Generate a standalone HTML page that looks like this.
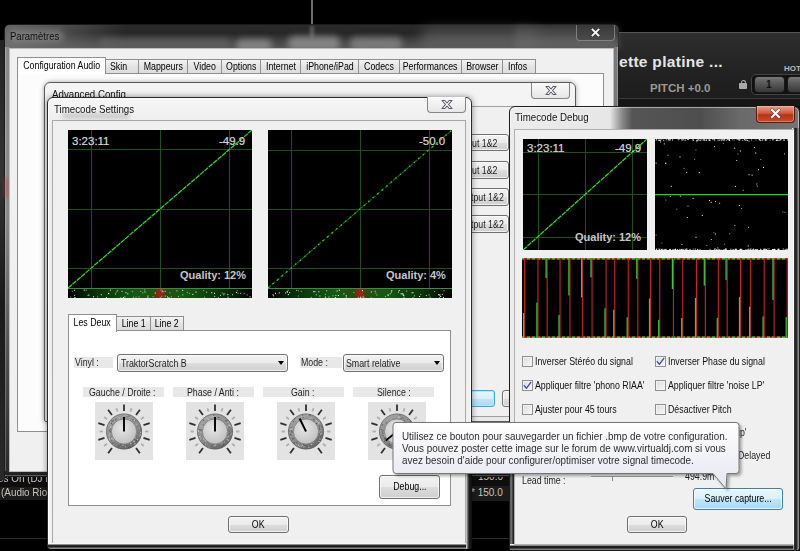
<!DOCTYPE html>
<html><head><meta charset="utf-8">
<style>
*{box-sizing:border-box;margin:0;padding:0}
html,body{width:800px;height:551px;overflow:hidden;background:#000}
body{position:relative;font-family:"Liberation Sans",sans-serif;font-size:9px;color:#1e1e1e}
.a{position:absolute}
.t{position:absolute;white-space:nowrap;line-height:1}
.d{font-size:10px !important;transform:scaleX(.88);transform-origin:0 0}
.sx{display:inline-block;transform:scaleX(.88);font-size:10px;white-space:nowrap;margin:0 -30px}
/* glass frame */
.glass{border:1px solid #1a1a1a;border-radius:6px 6px 2px 2px;box-shadow:inset 0 0 0 1px rgba(255,255,255,.35)}
.client{position:absolute;background:#f0f0f0;border:1px solid #9a9a9a}
.tab{position:absolute;height:15px;border:1px solid #8e8f8f;border-bottom:none;background:linear-gradient(#f3f3f3,#e3e3e3 50%,#dcdcdc);font-size:9px;line-height:14px;text-align:center;color:#000}
.tab.sel{background:#fff;height:17px;z-index:2}
.panel{position:absolute;background:#fff;border:1px solid #8e8f8f}
.btn{position:absolute;border:1px solid #707070;border-radius:3px;background:linear-gradient(#f2f2f2 0,#ebebeb 50%,#dddddd 51%,#cfcfcf 100%);box-shadow:inset 0 0 0 1px rgba(255,255,255,.7);text-align:center;font-size:9px;color:#000}
.btn.hot{border-color:#3c7fb1;background:linear-gradient(#eaf6fd 0,#d9f0fc 50%,#bee6fd 51%,#a7d9f5 100%)}
.closex{position:absolute;border:1px solid rgba(120,120,120,.9);border-top:none;border-radius:0 0 4px 4px;background:linear-gradient(#fbfbfb,#e6e6e6)}
.lblbg{position:absolute;background:#e8e8e8}
.combo{position:absolute;border:1px solid #707070;border-radius:3px;background:linear-gradient(#f2f2f2 0,#ebebeb 50%,#dddddd 51%,#cfcfcf 100%);box-shadow:inset 0 0 0 1px rgba(255,255,255,.7)}
.combo .arr{position:absolute;right:3px;top:6px;width:0;height:0;border-left:3.5px solid transparent;border-right:3.5px solid transparent;border-top:4px solid #000}
.chk{position:absolute;width:11px;height:11px;border:1px solid #8f8f8f;background:linear-gradient(135deg,#dcdcdc,#f8f8f8);box-shadow:inset 0 0 0 1px #f4f4f4}
</style></head><body>

<!-- ===== VirtualDJ background ===== -->
<div class="a" style="left:311px;top:0;width:2px;height:26px;background:#6a6a6a"></div>
<div class="a" style="left:600px;top:32px;width:200px;height:68px;background:linear-gradient(#2e2e2e,#222 60%,#1c1c1c);border-top:1px solid #555"></div>
<div class="a" style="left:600px;top:98px;width:200px;height:8px;background:linear-gradient(#3a3a3a 0,#3a3a3a 1px,#161616 1px)"></div>
<div class="t" style="left:619px;top:54px;font-size:15.5px;font-weight:bold;color:#e6e6e6;letter-spacing:0.3px">ette platine ...</div>
<div class="t" style="left:650px;top:83px;font-size:11.5px;font-weight:bold;color:#9a9a9a">PITCH +0.0</div>
<div class="t" style="left:784px;top:65px;font-size:8px;font-weight:bold;color:#bbb">HOT</div>
<div class="a" style="left:739px;top:83px;width:8px;height:6px;background:#aaa;border-radius:1px"></div>
<div class="a" style="left:740.5px;top:80px;width:5px;height:4px;border:1.3px solid #aaa;border-bottom:none;border-radius:2.5px 2.5px 0 0"></div>
<div class="a" style="left:751px;top:74px;width:60px;height:21px;background:#111;border:1px solid #444;border-radius:5px"></div>
<div class="a" style="left:754px;top:76px;width:31px;height:17px;background:linear-gradient(#777,#5a5a5a 40%,#383838);border-radius:4px;border:1px solid #1a1a1a"></div>
<div class="t" style="left:766px;top:80px;font-size:10px;font-weight:bold;color:#111">1</div>
<div class="a" style="left:787px;top:76px;width:20px;height:17px;background:linear-gradient(#777,#5a5a5a 40%,#383838);border-radius:4px;border:1px solid #1a1a1a"></div>
<div class="a" style="left:0;top:476px;width:60px;height:11px;background:#0e0e0e"></div>
<div class="a" style="left:0;top:487px;width:60px;height:13px;background:#1c1c1c"></div>
<div class="t" style="left:-2px;top:473px;font-size:11px;color:#c9c4bc;transform:scaleX(.9);transform-origin:0 0">es On (DJ I</div>
<div class="t" style="left:1px;top:487px;font-size:11px;color:#c9c4bc;transform:scaleX(.9);transform-origin:0 0">(Audio Rio</div>
<div class="a" style="left:0;top:538px;width:800px;height:1px;background:#2c2c2c"></div>
<div class="a" style="left:471px;top:476px;width:38px;height:11px;background:#0e0e0e"></div>
<div class="a" style="left:471px;top:486px;width:38px;height:15px;background:#1c1c1c"></div>
<div class="t" style="left:478px;top:472px;font-size:10px;color:#c9c4bc">150.0</div>
<div class="t" style="left:471px;top:488px;font-size:10px;color:#c9c4bc">* 150.0</div>
<div class="a" style="left:0;top:40px;width:5px;height:440px;background:linear-gradient(#222,#333 30%,#1a1a1a 60%,#2a2a2a)"></div>

<!-- ===== Paramètres window ===== -->
<div id="param" class="a glass" style="left:4px;top:24px;width:615px;height:453px;background:linear-gradient(90deg,#8c8c8c,#6a6a6a 15%,#5a5a5a 50%,#6a6a6a 80%,#808080)"></div>
<div class="a" style="left:5px;top:25px;width:613px;height:23px;border-radius:5px 5px 0 0;background:linear-gradient(#2a2a2a,#262626 35%,#484848 75%,#555 100%)"></div>
<div class="a" style="left:5px;top:25px;width:120px;height:23px;border-radius:5px 0 0 0;background:linear-gradient(90deg,rgba(120,120,120,.75),rgba(110,110,110,.5) 50%,rgba(90,90,90,0))"></div>
<div class="a" style="left:236px;top:39px;width:36px;height:12px;border-radius:6px;background:rgba(165,165,165,.6);filter:blur(3px)"></div>
<div class="a" style="left:288px;top:36px;width:52px;height:14px;border-radius:6px;background:rgba(170,170,170,.6);filter:blur(3px)"></div>
<div class="a" style="left:350px;top:37px;width:52px;height:13px;border-radius:6px;background:rgba(160,160,160,.55);filter:blur(3px)"></div>
<div class="a" style="left:100px;top:38px;width:130px;height:10px;background:rgba(110,110,110,.5);filter:blur(3px)"></div>
<div class="a" style="left:420px;top:28px;width:120px;height:20px;border-radius:10px;background:rgba(120,120,120,.45);filter:blur(6px)"></div>
<div class="a" style="left:310px;top:26px;width:4px;height:12px;background:rgba(140,140,140,.5);filter:blur(1.5px)"></div>
<div class="a" style="left:515px;top:26px;width:103px;height:22px;background:linear-gradient(rgba(80,80,80,.6),rgba(110,110,110,.8));filter:blur(3px)"></div>
<div class="a" style="left:8px;top:30px;width:56px;height:12px;border-radius:6px;background:rgba(150,150,150,.55);filter:blur(3px)"></div>
<div class="t" style="left:10px;top:32px;font-size:10.3px;color:#111;transform:scaleX(.925);transform-origin:0 0">Paramètres</div>
<div class="a" style="left:576px;top:25px;width:39px;height:16px;border:1px solid rgba(200,200,200,.45);border-top:none;border-radius:0 0 4px 4px;background:rgba(60,60,60,.5)"></div>
<svg class="a" style="left:589px;top:27px" width="13" height="11" viewBox="0 0 13 11"><path d="M3.5,2.5 L9.5,8.5 M9.5,2.5 L3.5,8.5" stroke="#1a1a1a" stroke-width="3.2" stroke-linecap="round" opacity=".45"/><path d="M3.5,2.5 L9.5,8.5 M9.5,2.5 L3.5,8.5" stroke="#f6f6f6" stroke-width="1.9" stroke-linecap="square"/></svg>

<div class="a" style="left:5px;top:47px;width:4px;height:425px;background:linear-gradient(#8a8a8a 0,#8a8a8a 40%,#555 70%,#2a2a2a 100%);box-shadow:inset 1px 0 0 rgba(255,255,255,.25)"></div>
<div class="a" style="left:614px;top:47px;width:4px;height:425px;background:linear-gradient(#7a7a7a 0,#6a6a6a 50%,#3a3a3a 100%);box-shadow:inset -1px 0 0 rgba(255,255,255,.25)"></div>
<div class="a" style="left:5px;top:471px;width:613px;height:5px;background:linear-gradient(#2a2a2a,#1e1e1e 70%,#777 100%);border-radius:0 0 2px 2px"></div>
<div class="a" style="left:5px;top:178px;width:4px;height:20px;background:rgba(190,70,70,.55);filter:blur(2px)"></div>
<div class="client" style="left:9px;top:48px;width:605px;height:424px;border-color:#bcbcbc"></div>
<!-- tabs -->
<div class="tab" style="left:105px;top:59px;width:34px;text-align:left"><span class="sx" style="margin:0;transform-origin:0 0;position:relative;left:4px">Skin</span></div>
<div class="tab" style="left:138px;top:59px;width:50px"><span class="sx">Mappeurs</span></div>
<div class="tab" style="left:187px;top:59px;width:35px"><span class="sx">Video</span></div>
<div class="tab" style="left:221px;top:59px;width:40px"><span class="sx">Options</span></div>
<div class="tab" style="left:260px;top:59px;width:41px"><span class="sx">Internet</span></div>
<div class="tab" style="left:300px;top:59px;width:59px"><span class="sx">iPhone/iPad</span></div>
<div class="tab" style="left:358px;top:59px;width:42px"><span class="sx">Codecs</span></div>
<div class="tab" style="left:399px;top:59px;width:63px"><span class="sx">Performances</span></div>
<div class="tab" style="left:461px;top:59px;width:42px"><span class="sx">Browser</span></div>
<div class="tab" style="left:502px;top:59px;width:34px;text-align:left"><span class="sx" style="margin:0;transform-origin:0 0;position:relative;left:5px">Infos</span></div>
<div class="panel" style="left:17px;top:73px;width:587px;height:359px;background:#fcfcfc"></div>
<div class="tab sel" style="left:17px;top:57px;width:89px;line-height:15px"><span class="sx">Configuration Audio</span></div>

<!-- ===== Advanced Config window ===== -->
<div class="a" style="left:44px;top:82px;width:532px;height:340px;border:1px solid #5a5a5a;border-radius:6px 6px 2px 2px;background:linear-gradient(#f4f4f4,#e9e9e9);box-shadow:0 0 5px rgba(0,0,0,.35)"></div>
<div class="t" style="left:52px;top:89px;font-size:10.5px;color:#111;transform:scaleX(.925);transform-origin:0 0">Advanced Config</div>
<div class="closex" style="left:531px;top:83px;width:39px;height:16px"></div>
<svg class="a" style="left:545px;top:85px" width="12" height="11" viewBox="0 0 12 11"><path d="M1,1.5 L3.8,1.5 L6,4 L8.2,1.5 L11,1.5 L7.5,5.5 L11,9.5 L8.2,9.5 L6,7 L3.8,9.5 L1,9.5 L4.5,5.5 Z" fill="#fff" stroke="#5a5a6a" stroke-width="1.1" stroke-linejoin="round"/></svg>
<div class="a" style="left:49px;top:106px;width:522px;height:311px;background:#f0f0f0;border:1px solid #a0a0a0"></div>
<!-- visible buttons of Advanced config -->
<div class="btn" style="left:440px;top:134px;width:69px;height:17px"></div>
<div class="t d" style="left:471.5px;top:138.5px">ut 1&amp;2</div>
<div class="btn" style="left:440px;top:161px;width:69px;height:18px"></div>
<div class="t d" style="left:471.5px;top:166px">ut 1&amp;2</div>
<div class="btn" style="left:440px;top:188px;width:69px;height:18px"></div>
<div class="t d" style="left:471px;top:193px">tput 1&amp;2</div>
<div class="btn" style="left:440px;top:215px;width:69px;height:18px"></div>
<div class="t d" style="left:471px;top:220px">tput 1&amp;2</div>
<div class="btn hot" style="left:450px;top:390px;width:45px;height:17px;border-color:#34a8e8;box-shadow:inset 0 0 0 1px #b6e6fb"></div>
<div class="btn" style="left:502px;top:390px;width:30px;height:17px"></div>

<!-- ===== Timecode Settings window ===== -->
<div class="a" style="left:47px;top:97px;width:425px;height:452px;border:1px solid #2a2a2a;border-radius:6px 6px 3px 3px;background:linear-gradient(#f6f6f6,#ececec 30px,#f2f2f2);box-shadow:0 0 6px rgba(0,0,0,.45),inset 0 0 0 1px rgba(255,255,255,.9)"></div>
<div class="a" style="left:62px;top:113px;width:68px;height:6px;border-radius:4px;background:rgba(120,120,120,.3);filter:blur(2px)"></div>
<div class="t" style="left:54px;top:104px;font-size:10.5px;color:#111;transform:scaleX(.925);transform-origin:0 0">Timecode Settings</div>
<div class="closex" style="left:427px;top:97px;width:39px;height:16px"></div>
<svg class="a" style="left:441px;top:99px" width="12" height="11" viewBox="0 0 12 11"><path d="M1,1.5 L3.8,1.5 L6,4 L8.2,1.5 L11,1.5 L7.5,5.5 L11,9.5 L8.2,9.5 L6,7 L3.8,9.5 L1,9.5 L4.5,5.5 Z" fill="#fff" stroke="#5a5a6a" stroke-width="1.1" stroke-linejoin="round"/></svg>
<div class="a" style="left:52px;top:120px;width:414px;height:424px;background:#f0f0f0;border:1px solid #a8a8a8"></div>
<div class="a" style="left:466px;top:474px;width:6px;height:75px;border-radius:0 0 4px 0;background:linear-gradient(90deg,#e8e8e8 0,#9a9a9a 1px,#555 2px,#222 3px,#111 5px)"></div>
<div class="a" style="left:48px;top:543px;width:418px;height:6px;border-radius:0 0 0 3px;background:linear-gradient(#f6f6f6 0,#f6f6f6 1px,#2a2a2a 2px,#1a1a1a 4px,#8a8a8a 5px)"></div>
<div class="a" style="left:68px;top:130px"><svg class="a" width="184" height="158" viewBox="0 0 184 158"><rect width="184" height="158" fill="#000"/><rect x="23" y="0" width="1" height="158" fill="#1a521a"/><rect x="92" y="0" width="1" height="158" fill="#1a521a"/><rect x="161" y="0" width="1" height="158" fill="#1a521a"/><rect x="0" y="19" width="184" height="1" fill="#1a521a"/><rect x="0" y="79" width="184" height="1" fill="#1a521a"/><rect x="0" y="138" width="184" height="1" fill="#1a521a"/><line x1="0" y1="158" x2="184" y2="0" stroke="#28e028" stroke-width="1.25" stroke-dasharray="5 0.8"/></svg></div>
<div class="a" style="left:68px;top:289px"><svg class="a" width="184" height="9" viewBox="0 0 184 9"><defs><linearGradient id="sg1" x1="0" x2="1"><stop offset="0" stop-color="#000"/><stop offset="0.12" stop-color="#062a06"/><stop offset="0.36" stop-color="#125c12"/><stop offset="0.465" stop-color="#245010"/><stop offset="0.5" stop-color="#b01a14"/><stop offset="0.535" stop-color="#245010"/><stop offset="0.64" stop-color="#125c12"/><stop offset="0.88" stop-color="#062a06"/><stop offset="1" stop-color="#000"/></linearGradient></defs><rect width="184" height="9" fill="url(#sg1)"/><g fill="#fff"><rect x="25.0" y="7.3" width="1" height="1" opacity="1"/><rect x="47.1" y="4.5" width="1" height="1" opacity="0.8"/><rect x="86.7" y="3.5" width="1" height="1" opacity="1"/><rect x="17.6" y="0.7" width="1" height="1" opacity="0.8"/><rect x="79.5" y="6.6" width="1" height="1" opacity="1"/><rect x="127.5" y="2.6" width="1" height="1" opacity="1"/><rect x="108.4" y="1.3" width="1" height="1" opacity="0.8"/><rect x="6.1" y="0.7" width="1" height="1" opacity="0.6"/><rect x="2.2" y="7.5" width="1" height="1" opacity="0.6"/><rect x="40.0" y="3.9" width="1" height="1" opacity="1"/><rect x="96.8" y="6.6" width="1" height="1" opacity="0.8"/><rect x="101.4" y="3.3" width="1" height="1" opacity="0.6"/><rect x="40.4" y="4.2" width="1" height="1" opacity="0.8"/><rect x="169.6" y="3.8" width="1" height="1" opacity="0.6"/><rect x="168.8" y="1.3" width="1" height="1" opacity="0.6"/><rect x="181.6" y="7.4" width="1" height="1" opacity="1"/><rect x="136.1" y="7.7" width="1" height="1" opacity="0.6"/><rect x="91.9" y="8.2" width="1" height="1" opacity="0.6"/><rect x="152.0" y="5.9" width="1" height="1" opacity="0.8"/><rect x="52.4" y="8.3" width="1" height="1" opacity="0.8"/><rect x="154.9" y="4.5" width="1" height="1" opacity="0.6"/><rect x="156.2" y="4.3" width="1" height="1" opacity="0.6"/><rect x="146.0" y="3.8" width="1" height="1" opacity="1"/><rect x="67.5" y="7.6" width="1" height="1" opacity="0.6"/><rect x="135.2" y="1.2" width="1" height="1" opacity="0.6"/><rect x="93.3" y="6.7" width="1" height="1" opacity="0.6"/><rect x="153.8" y="3.5" width="1" height="1" opacity="0.6"/><rect x="5.9" y="0.8" width="1" height="1" opacity="0.6"/><rect x="155.3" y="5.4" width="1" height="1" opacity="0.6"/><rect x="72.3" y="1.9" width="1" height="1" opacity="0.6"/><rect x="41.9" y="0.6" width="1" height="1" opacity="1"/><rect x="99.0" y="7.4" width="1" height="1" opacity="1"/><rect x="74.3" y="3.3" width="1" height="1" opacity="0.6"/><rect x="65.0" y="7.8" width="1" height="1" opacity="0.6"/><rect x="100.5" y="8.2" width="1" height="1" opacity="1"/><rect x="70.5" y="7.4" width="1" height="1" opacity="0.6"/><rect x="94.0" y="1.5" width="1" height="1" opacity="0.6"/><rect x="38.0" y="8.1" width="1" height="1" opacity="0.8"/><rect x="159.3" y="5.1" width="1" height="1" opacity="1"/><rect x="172.2" y="3.8" width="1" height="1" opacity="0.8"/><rect x="76.1" y="0.5" width="1" height="1" opacity="0.6"/><rect x="114.3" y="5.4" width="1" height="1" opacity="0.8"/><rect x="110.0" y="6.9" width="1" height="1" opacity="0.6"/><rect x="32.8" y="5.2" width="1" height="1" opacity="1"/><rect x="146.2" y="6.9" width="1" height="1" opacity="0.8"/><rect x="6.4" y="8.0" width="1" height="1" opacity="1"/><rect x="15.7" y="0.6" width="1" height="1" opacity="1"/><rect x="138.1" y="2.7" width="1" height="1" opacity="0.8"/><rect x="20.5" y="5.5" width="1" height="1" opacity="0.8"/><rect x="53.5" y="1.8" width="1" height="1" opacity="0.8"/><rect x="96.7" y="1.8" width="1" height="1" opacity="0.8"/><rect x="118.8" y="2.9" width="1" height="1" opacity="0.6"/><rect x="59.3" y="4.3" width="1" height="1" opacity="1"/><rect x="57.4" y="3.2" width="1" height="1" opacity="1"/><rect x="47.7" y="2.5" width="1" height="1" opacity="0.6"/><rect x="93.6" y="2.2" width="1" height="1" opacity="0.6"/><rect x="79.3" y="8.3" width="1" height="1" opacity="1"/><rect x="3.8" y="1.7" width="1" height="1" opacity="0.6"/><rect x="175.7" y="4.1" width="1" height="1" opacity="0.6"/><rect x="124.3" y="4.9" width="1" height="1" opacity="1"/><rect x="178.8" y="5.5" width="1" height="1" opacity="0.6"/><rect x="94.8" y="2.3" width="1" height="1" opacity="0.6"/><rect x="6.1" y="5.9" width="1" height="1" opacity="0.8"/><rect x="120.9" y="3.9" width="1" height="1" opacity="0.6"/><rect x="55.0" y="8.2" width="1" height="1" opacity="1"/><rect x="56.4" y="7.4" width="1" height="1" opacity="0.8"/><rect x="167.9" y="2.9" width="1" height="1" opacity="1"/><rect x="76.5" y="2.5" width="1" height="1" opacity="1"/><rect x="102.8" y="7.3" width="1" height="1" opacity="0.6"/><rect x="150.0" y="8.2" width="1" height="1" opacity="0.6"/><rect x="84.6" y="7.1" width="1" height="1" opacity="0.6"/><rect x="114.2" y="0.8" width="1" height="1" opacity="1"/><rect x="63.8" y="2.1" width="1" height="1" opacity="0.6"/><rect x="164.1" y="5.2" width="1" height="1" opacity="0.8"/><rect x="19.6" y="5.8" width="1" height="1" opacity="0.8"/><rect x="92.5" y="0.6" width="1" height="1" opacity="0.6"/><rect x="159.6" y="7.7" width="1" height="1" opacity="1"/><rect x="29.1" y="7.4" width="1" height="1" opacity="0.6"/><rect x="143.3" y="3.2" width="1" height="1" opacity="1"/><rect x="49.1" y="1.3" width="1" height="1" opacity="0.8"/></g></svg></div>
<div class="a" style="left:68px;top:288px;width:184px;height:1px;background:#3c8c3c"></div>
<div class="t" style="left:72px;top:136px;font-size:11.5px;color:#d8d8d8;-webkit-text-stroke:0.2px #d8d8d8">3:23:11</div>
<div class="t" style="left:219px;top:136px;font-size:11.5px;color:#d8d8d8;-webkit-text-stroke:0.2px #d8d8d8">-49.9</div>
<div class="t" style="left:180px;top:270px;font-size:11px;font-weight:bold;color:#c6c6c6">Quality: 12%</div>
<div class="a" style="left:268px;top:130px"><svg class="a" width="184" height="158" viewBox="0 0 184 158"><rect width="184" height="158" fill="#000"/><rect x="23" y="0" width="1" height="158" fill="#1a521a"/><rect x="92" y="0" width="1" height="158" fill="#1a521a"/><rect x="161" y="0" width="1" height="158" fill="#1a521a"/><rect x="0" y="20" width="184" height="1" fill="#1a521a"/><rect x="0" y="79" width="184" height="1" fill="#1a521a"/><rect x="0" y="138" width="184" height="1" fill="#1a521a"/><line x1="0" y1="158" x2="184" y2="0" stroke="#127012" stroke-width="1.1" stroke-dasharray="4 1.5"/><line x1="0" y1="158" x2="184" y2="0" stroke="#2ad82a" stroke-width="1.3" stroke-dasharray="1.5 4.5"/></svg></div>
<div class="a" style="left:268px;top:289px"><svg class="a" width="184" height="9" viewBox="0 0 184 9"><defs><linearGradient id="sg2" x1="0" x2="1"><stop offset="0" stop-color="#000"/><stop offset="0.12" stop-color="#062a06"/><stop offset="0.36" stop-color="#125c12"/><stop offset="0.465" stop-color="#245010"/><stop offset="0.5" stop-color="#b01a14"/><stop offset="0.535" stop-color="#245010"/><stop offset="0.64" stop-color="#125c12"/><stop offset="0.88" stop-color="#062a06"/><stop offset="1" stop-color="#000"/></linearGradient></defs><rect width="184" height="9" fill="url(#sg2)"/><g fill="#fff"><rect x="175.0" y="8.1" width="1" height="1" opacity="1"/><rect x="17.2" y="3.4" width="1" height="1" opacity="1"/><rect x="134.8" y="5.9" width="1" height="1" opacity="0.8"/><rect x="46.4" y="2.2" width="1" height="1" opacity="1"/><rect x="106.6" y="1.8" width="1" height="1" opacity="0.8"/><rect x="117.0" y="6.9" width="1" height="1" opacity="0.6"/><rect x="173.8" y="4.9" width="1" height="1" opacity="0.8"/><rect x="92.1" y="7.7" width="1" height="1" opacity="1"/><rect x="66.9" y="8.0" width="1" height="1" opacity="0.8"/><rect x="77.8" y="7.6" width="1" height="1" opacity="1"/><rect x="102.8" y="2.4" width="1" height="1" opacity="1"/><rect x="32.8" y="1.9" width="1" height="1" opacity="0.6"/><rect x="93.6" y="8.5" width="1" height="1" opacity="0.6"/><rect x="102.7" y="8.5" width="1" height="1" opacity="0.8"/><rect x="145.9" y="6.4" width="1" height="1" opacity="0.8"/><rect x="144.6" y="3.3" width="1" height="1" opacity="0.8"/><rect x="29.9" y="6.5" width="1" height="1" opacity="0.6"/><rect x="135.3" y="5.7" width="1" height="1" opacity="1"/><rect x="89.9" y="7.9" width="1" height="1" opacity="0.6"/><rect x="94.6" y="6.9" width="1" height="1" opacity="0.6"/><rect x="161.6" y="7.7" width="1" height="1" opacity="0.8"/><rect x="64.5" y="6.3" width="1" height="1" opacity="0.6"/><rect x="132.6" y="4.4" width="1" height="1" opacity="1"/><rect x="172.2" y="7.0" width="1" height="1" opacity="1"/><rect x="160.5" y="5.4" width="1" height="1" opacity="0.8"/><rect x="57.0" y="8.2" width="1" height="1" opacity="0.6"/><rect x="152.2" y="5.0" width="1" height="1" opacity="0.6"/><rect x="119.4" y="5.2" width="1" height="1" opacity="0.8"/><rect x="133.9" y="4.4" width="1" height="1" opacity="0.8"/><rect x="171.0" y="5.5" width="1" height="1" opacity="1"/><rect x="143.6" y="3.2" width="1" height="1" opacity="1"/><rect x="166.1" y="2.0" width="1" height="1" opacity="0.6"/><rect x="19.9" y="5.1" width="1" height="1" opacity="1"/><rect x="50.3" y="2.3" width="1" height="1" opacity="1"/><rect x="138.2" y="1.6" width="1" height="1" opacity="0.8"/><rect x="45.2" y="2.2" width="1" height="1" opacity="1"/><rect x="77.7" y="6.2" width="1" height="1" opacity="1"/><rect x="10.9" y="3.4" width="1" height="1" opacity="1"/><rect x="123.3" y="1.2" width="1" height="1" opacity="1"/><rect x="5.1" y="6.3" width="1" height="1" opacity="1"/><rect x="68.6" y="1.5" width="1" height="1" opacity="1"/><rect x="134.6" y="4.7" width="1" height="1" opacity="1"/><rect x="70.9" y="0.8" width="1" height="1" opacity="1"/><rect x="28.1" y="0.8" width="1" height="1" opacity="0.8"/><rect x="171.8" y="5.5" width="1" height="1" opacity="0.6"/><rect x="21.1" y="3.2" width="1" height="1" opacity="1"/><rect x="56.8" y="4.9" width="1" height="1" opacity="0.6"/><rect x="135.5" y="7.7" width="1" height="1" opacity="0.8"/><rect x="157.9" y="6.1" width="1" height="1" opacity="0.8"/><rect x="175.5" y="1.2" width="1" height="1" opacity="0.6"/><rect x="58.2" y="1.3" width="1" height="1" opacity="0.8"/><rect x="144.4" y="8.1" width="1" height="1" opacity="0.6"/><rect x="107.3" y="3.6" width="1" height="1" opacity="0.6"/><rect x="60.4" y="7.5" width="1" height="1" opacity="0.8"/><rect x="47.8" y="5.3" width="1" height="1" opacity="0.8"/><rect x="119.7" y="6.1" width="1" height="1" opacity="1"/><rect x="122.9" y="2.5" width="1" height="1" opacity="1"/><rect x="29.9" y="1.3" width="1" height="1" opacity="0.6"/><rect x="42.8" y="7.8" width="1" height="1" opacity="0.6"/><rect x="171.0" y="8.5" width="1" height="1" opacity="1"/><rect x="130.8" y="1.1" width="1" height="1" opacity="1"/><rect x="108.4" y="5.5" width="1" height="1" opacity="0.6"/><rect x="130.0" y="2.6" width="1" height="1" opacity="0.8"/><rect x="51.4" y="6.5" width="1" height="1" opacity="1"/><rect x="7.0" y="3.8" width="1" height="1" opacity="1"/><rect x="94.0" y="1.2" width="1" height="1" opacity="1"/><rect x="18.7" y="2.0" width="1" height="1" opacity="1"/><rect x="19.7" y="0.7" width="1" height="1" opacity="0.6"/><rect x="85.3" y="3.0" width="1" height="1" opacity="0.6"/><rect x="69.9" y="6.0" width="1" height="1" opacity="1"/><rect x="133.5" y="4.0" width="1" height="1" opacity="0.6"/><rect x="4.4" y="5.2" width="1" height="1" opacity="0.8"/><rect x="170.0" y="5.2" width="1" height="1" opacity="1"/><rect x="121.6" y="4.3" width="1" height="1" opacity="1"/><rect x="95.3" y="7.9" width="1" height="1" opacity="0.6"/><rect x="67.4" y="6.0" width="1" height="1" opacity="0.8"/><rect x="56.8" y="7.5" width="1" height="1" opacity="0.8"/><rect x="19.0" y="2.9" width="1" height="1" opacity="0.6"/><rect x="151.1" y="7.0" width="1" height="1" opacity="1"/><rect x="75.4" y="4.4" width="1" height="1" opacity="1"/></g></svg></div>
<div class="a" style="left:268px;top:288px;width:184px;height:1px;background:#3c8c3c"></div>
<div class="t" style="left:419px;top:136px;font-size:11.5px;color:#d8d8d8;-webkit-text-stroke:0.2px #d8d8d8">-50.0</div>
<div class="t" style="left:386px;top:270px;font-size:11px;font-weight:bold;color:#c6c6c6">Quality: 4%</div>

<!-- tab control -->
<div class="tab" style="left:116px;top:316px;width:35px;height:15px"><span class="sx">Line 1</span></div>
<div class="tab" style="left:150px;top:316px;width:34px;height:15px"><span class="sx">Line 2</span></div>
<div class="panel" style="left:68px;top:330px;width:383px;height:176px;background:#fff"></div>
<div class="tab sel" style="left:68px;top:314px;width:49px;height:18px;line-height:16px"><span class="sx">Les Deux</span></div>

<div class="lblbg" style="left:74px;top:357px;width:39px;height:11px"></div>
<div class="t d" style="left:75px;top:358px">Vinyl :</div>
<div class="combo" style="left:117px;top:354px;width:171px;height:18px"><div class="arr"></div></div>
<div class="t d" style="left:121px;top:359px">TraktorScratch B</div>
<div class="lblbg" style="left:300px;top:357px;width:42px;height:11px"></div>
<div class="t d" style="left:301px;top:358px">Mode :</div>
<div class="combo" style="left:343px;top:354px;width:101px;height:18px"><div class="arr"></div></div>
<div class="t d" style="left:346px;top:359px">Smart relative</div>

<div class="lblbg" style="left:83px;top:387px;width:81px;height:10px"></div>
<div class="t d" style="left:89px;top:388px">Gauche / Droite :</div>
<div class="lblbg" style="left:173px;top:387px;width:81px;height:10px"></div>
<div class="t d" style="left:187px;top:388px">Phase / Anti :</div>
<div class="lblbg" style="left:263px;top:387px;width:81px;height:10px"></div>
<div class="t d" style="left:291px;top:388px">Gain :</div>
<div class="lblbg" style="left:353px;top:387px;width:81px;height:10px"></div>
<div class="t d" style="left:377px;top:388px">Silence :</div>
<div class="a" style="left:95px;top:402px;width:58px;height:58px;background:#e3e3e3"><svg class="a" width="58" height="58" viewBox="0 0 58 58"><defs><radialGradient id="kg1" cx="0.42" cy="0.38" r="0.65"><stop offset="0" stop-color="#e6e6e6"/><stop offset="1" stop-color="#c0c0c0"/></radialGradient><linearGradient id="kr1" x1="0.2" y1="0" x2="0.8" y2="1"><stop offset="0" stop-color="#a4a4a4"/><stop offset="0.55" stop-color="#8a8a8a"/><stop offset="1" stop-color="#626262"/></linearGradient></defs><line x1="16.95" y1="46.08" x2="13.13" y2="51.34" stroke="#303030" stroke-width="1.8"/><line x1="9.50" y1="35.83" x2="3.32" y2="37.84" stroke="#303030" stroke-width="1.8"/><line x1="9.50" y1="23.17" x2="3.32" y2="21.16" stroke="#303030" stroke-width="1.8"/><line x1="16.95" y1="12.92" x2="13.13" y2="7.66" stroke="#303030" stroke-width="1.8"/><line x1="29.00" y1="9.00" x2="29.00" y2="2.50" stroke="#303030" stroke-width="1.8"/><line x1="41.05" y1="12.92" x2="44.87" y2="7.66" stroke="#303030" stroke-width="1.8"/><line x1="48.50" y1="23.17" x2="54.68" y2="21.16" stroke="#303030" stroke-width="1.8"/><line x1="48.50" y1="35.83" x2="54.68" y2="37.84" stroke="#303030" stroke-width="1.8"/><line x1="41.05" y1="46.08" x2="44.87" y2="51.34" stroke="#303030" stroke-width="1.8"/><line x1="12.01" y1="41.84" x2="9.18" y2="43.90" stroke="#b0b0b0" stroke-width="1.9"/><line x1="8.00" y1="29.50" x2="4.50" y2="29.50" stroke="#b0b0b0" stroke-width="1.9"/><line x1="12.01" y1="17.16" x2="9.18" y2="15.10" stroke="#b0b0b0" stroke-width="1.9"/><line x1="22.51" y1="9.53" x2="21.43" y2="6.20" stroke="#b0b0b0" stroke-width="1.9"/><line x1="35.49" y1="9.53" x2="36.57" y2="6.20" stroke="#b0b0b0" stroke-width="1.9"/><line x1="45.99" y1="17.16" x2="48.82" y2="15.10" stroke="#b0b0b0" stroke-width="1.9"/><line x1="50.00" y1="29.50" x2="53.50" y2="29.50" stroke="#b0b0b0" stroke-width="1.9"/><line x1="45.99" y1="41.84" x2="48.82" y2="43.90" stroke="#b0b0b0" stroke-width="1.9"/><circle cx="29" cy="29.5" r="17.8" fill="url(#kr1)"/><rect x="39.3" y="41.2" width="1.2" height="1.2" fill="#d4d4d4" opacity="0.8"/><rect x="27.9" y="43.9" width="1.2" height="1.2" fill="#4a4a4a" opacity="0.8"/><rect x="14.1" y="31.4" width="1.2" height="1.2" fill="#c0c0c0" opacity="0.8"/><rect x="39.3" y="36.2" width="1.2" height="1.2" fill="#4a4a4a" opacity="0.8"/><rect x="13.8" y="35.5" width="1.2" height="1.2" fill="#d4d4d4" opacity="0.8"/><rect x="23.7" y="15.6" width="1.2" height="1.2" fill="#c0c0c0" opacity="0.8"/><rect x="17.1" y="21.6" width="1.2" height="1.2" fill="#5a5a5a" opacity="0.8"/><rect x="41.3" y="31.4" width="1.2" height="1.2" fill="#b0b0b0" opacity="0.8"/><rect x="44.9" y="29.9" width="1.2" height="1.2" fill="#c0c0c0" opacity="0.8"/><rect x="44.0" y="25.8" width="1.2" height="1.2" fill="#b0b0b0" opacity="0.8"/><rect x="31.0" y="43.4" width="1.2" height="1.2" fill="#4a4a4a" opacity="0.8"/><rect x="14.8" y="24.2" width="1.2" height="1.2" fill="#c0c0c0" opacity="0.8"/><rect x="29.6" y="12.1" width="1.2" height="1.2" fill="#d4d4d4" opacity="0.8"/><rect x="14.0" y="37.3" width="1.2" height="1.2" fill="#d4d4d4" opacity="0.8"/><rect x="35.1" y="44.5" width="1.2" height="1.2" fill="#5a5a5a" opacity="0.8"/><rect x="38.8" y="38.8" width="1.2" height="1.2" fill="#b0b0b0" opacity="0.8"/><rect x="41.9" y="23.2" width="1.2" height="1.2" fill="#c0c0c0" opacity="0.8"/><rect x="23.3" y="43.4" width="1.2" height="1.2" fill="#4a4a4a" opacity="0.8"/><rect x="36.9" y="16.5" width="1.2" height="1.2" fill="#b0b0b0" opacity="0.8"/><rect x="37.4" y="17.0" width="1.2" height="1.2" fill="#4a4a4a" opacity="0.8"/><rect x="16.6" y="35.9" width="1.2" height="1.2" fill="#b0b0b0" opacity="0.8"/><rect x="40.3" y="18.1" width="1.2" height="1.2" fill="#5a5a5a" opacity="0.8"/><rect x="41.8" y="37.0" width="1.2" height="1.2" fill="#d4d4d4" opacity="0.8"/><rect x="31.1" y="14.1" width="1.2" height="1.2" fill="#4a4a4a" opacity="0.8"/><rect x="17.5" y="40.5" width="1.2" height="1.2" fill="#4a4a4a" opacity="0.8"/><rect x="43.6" y="33.2" width="1.2" height="1.2" fill="#b0b0b0" opacity="0.8"/><rect x="16.3" y="20.8" width="1.2" height="1.2" fill="#c0c0c0" opacity="0.8"/><rect x="35.2" y="41.0" width="1.2" height="1.2" fill="#d4d4d4" opacity="0.8"/><rect x="30.3" y="13.9" width="1.2" height="1.2" fill="#b0b0b0" opacity="0.8"/><rect x="30.1" y="43.9" width="1.2" height="1.2" fill="#b0b0b0" opacity="0.8"/><rect x="18.3" y="42.2" width="1.2" height="1.2" fill="#b0b0b0" opacity="0.8"/><rect x="16.1" y="18.8" width="1.2" height="1.2" fill="#4a4a4a" opacity="0.8"/><rect x="31.8" y="13.0" width="1.2" height="1.2" fill="#b0b0b0" opacity="0.8"/><rect x="33.9" y="14.9" width="1.2" height="1.2" fill="#b0b0b0" opacity="0.8"/><rect x="33.0" y="45.0" width="1.2" height="1.2" fill="#4a4a4a" opacity="0.8"/><rect x="38.9" y="17.8" width="1.2" height="1.2" fill="#c0c0c0" opacity="0.8"/><rect x="42.1" y="23.6" width="1.2" height="1.2" fill="#5a5a5a" opacity="0.8"/><rect x="17.2" y="35.6" width="1.2" height="1.2" fill="#b0b0b0" opacity="0.8"/><rect x="17.4" y="18.1" width="1.2" height="1.2" fill="#4a4a4a" opacity="0.8"/><rect x="15.3" y="19.4" width="1.2" height="1.2" fill="#c0c0c0" opacity="0.8"/><rect x="15.4" y="24.6" width="1.2" height="1.2" fill="#d4d4d4" opacity="0.8"/><rect x="33.3" y="13.5" width="1.2" height="1.2" fill="#5a5a5a" opacity="0.8"/><rect x="44.8" y="32.3" width="1.2" height="1.2" fill="#d4d4d4" opacity="0.8"/><rect x="39.7" y="35.4" width="1.2" height="1.2" fill="#d4d4d4" opacity="0.8"/><rect x="28.8" y="14.8" width="1.2" height="1.2" fill="#5a5a5a" opacity="0.8"/><rect x="40.4" y="38.7" width="1.2" height="1.2" fill="#5a5a5a" opacity="0.8"/><rect x="25.0" y="42.1" width="1.2" height="1.2" fill="#5a5a5a" opacity="0.8"/><rect x="14.9" y="26.6" width="1.2" height="1.2" fill="#5a5a5a" opacity="0.8"/><rect x="19.9" y="17.5" width="1.2" height="1.2" fill="#5a5a5a" opacity="0.8"/><rect x="14.9" y="29.2" width="1.2" height="1.2" fill="#5a5a5a" opacity="0.8"/><rect x="17.3" y="38.5" width="1.2" height="1.2" fill="#c0c0c0" opacity="0.8"/><rect x="27.7" y="42.9" width="1.2" height="1.2" fill="#b0b0b0" opacity="0.8"/><rect x="45.1" y="26.4" width="1.2" height="1.2" fill="#4a4a4a" opacity="0.8"/><rect x="33.7" y="17.0" width="1.2" height="1.2" fill="#d4d4d4" opacity="0.8"/><rect x="17.9" y="36.8" width="1.2" height="1.2" fill="#c0c0c0" opacity="0.8"/><rect x="14.2" y="33.9" width="1.2" height="1.2" fill="#4a4a4a" opacity="0.8"/><rect x="15.1" y="25.1" width="1.2" height="1.2" fill="#b0b0b0" opacity="0.8"/><rect x="14.0" y="33.5" width="1.2" height="1.2" fill="#d4d4d4" opacity="0.8"/><rect x="16.3" y="38.3" width="1.2" height="1.2" fill="#5a5a5a" opacity="0.8"/><rect x="20.5" y="16.5" width="1.2" height="1.2" fill="#5a5a5a" opacity="0.8"/><rect x="38.2" y="38.7" width="1.2" height="1.2" fill="#d4d4d4" opacity="0.8"/><rect x="22.7" y="44.3" width="1.2" height="1.2" fill="#5a5a5a" opacity="0.8"/><rect x="40.7" y="21.8" width="1.2" height="1.2" fill="#c0c0c0" opacity="0.8"/><rect x="16.3" y="35.9" width="1.2" height="1.2" fill="#d4d4d4" opacity="0.8"/><rect x="13.2" y="22.8" width="1.2" height="1.2" fill="#b0b0b0" opacity="0.8"/><rect x="35.5" y="13.6" width="1.2" height="1.2" fill="#b0b0b0" opacity="0.8"/><rect x="12.6" y="32.9" width="1.2" height="1.2" fill="#b0b0b0" opacity="0.8"/><rect x="13.9" y="28.1" width="1.2" height="1.2" fill="#5a5a5a" opacity="0.8"/><rect x="40.8" y="37.8" width="1.2" height="1.2" fill="#4a4a4a" opacity="0.8"/><rect x="15.8" y="20.8" width="1.2" height="1.2" fill="#4a4a4a" opacity="0.8"/><circle cx="29" cy="29.5" r="17.6" fill="none" stroke="#505050" stroke-width="0.7" opacity="0.8"/><circle cx="29" cy="29.5" r="12.6" fill="url(#kg1)" stroke="#7a7a7a" stroke-width="0.8"/><line x1="29" y1="29.5" x2="29.00" y2="15.00" stroke="#000" stroke-width="1.9"/></svg></div>
<div class="a" style="left:186px;top:402px;width:58px;height:58px;background:#e3e3e3"><svg class="a" width="58" height="58" viewBox="0 0 58 58"><defs><radialGradient id="kg2" cx="0.42" cy="0.38" r="0.65"><stop offset="0" stop-color="#e6e6e6"/><stop offset="1" stop-color="#c0c0c0"/></radialGradient><linearGradient id="kr2" x1="0.2" y1="0" x2="0.8" y2="1"><stop offset="0" stop-color="#a4a4a4"/><stop offset="0.55" stop-color="#8a8a8a"/><stop offset="1" stop-color="#626262"/></linearGradient></defs><line x1="16.95" y1="46.08" x2="13.13" y2="51.34" stroke="#303030" stroke-width="1.8"/><line x1="9.50" y1="35.83" x2="3.32" y2="37.84" stroke="#303030" stroke-width="1.8"/><line x1="9.50" y1="23.17" x2="3.32" y2="21.16" stroke="#303030" stroke-width="1.8"/><line x1="16.95" y1="12.92" x2="13.13" y2="7.66" stroke="#303030" stroke-width="1.8"/><line x1="29.00" y1="9.00" x2="29.00" y2="2.50" stroke="#303030" stroke-width="1.8"/><line x1="41.05" y1="12.92" x2="44.87" y2="7.66" stroke="#303030" stroke-width="1.8"/><line x1="48.50" y1="23.17" x2="54.68" y2="21.16" stroke="#303030" stroke-width="1.8"/><line x1="48.50" y1="35.83" x2="54.68" y2="37.84" stroke="#303030" stroke-width="1.8"/><line x1="41.05" y1="46.08" x2="44.87" y2="51.34" stroke="#303030" stroke-width="1.8"/><line x1="12.01" y1="41.84" x2="9.18" y2="43.90" stroke="#b0b0b0" stroke-width="1.9"/><line x1="8.00" y1="29.50" x2="4.50" y2="29.50" stroke="#b0b0b0" stroke-width="1.9"/><line x1="12.01" y1="17.16" x2="9.18" y2="15.10" stroke="#b0b0b0" stroke-width="1.9"/><line x1="22.51" y1="9.53" x2="21.43" y2="6.20" stroke="#b0b0b0" stroke-width="1.9"/><line x1="35.49" y1="9.53" x2="36.57" y2="6.20" stroke="#b0b0b0" stroke-width="1.9"/><line x1="45.99" y1="17.16" x2="48.82" y2="15.10" stroke="#b0b0b0" stroke-width="1.9"/><line x1="50.00" y1="29.50" x2="53.50" y2="29.50" stroke="#b0b0b0" stroke-width="1.9"/><line x1="45.99" y1="41.84" x2="48.82" y2="43.90" stroke="#b0b0b0" stroke-width="1.9"/><circle cx="29" cy="29.5" r="17.8" fill="url(#kr2)"/><rect x="44.6" y="24.3" width="1.2" height="1.2" fill="#d4d4d4" opacity="0.8"/><rect x="40.5" y="36.8" width="1.2" height="1.2" fill="#c0c0c0" opacity="0.8"/><rect x="27.0" y="13.3" width="1.2" height="1.2" fill="#5a5a5a" opacity="0.8"/><rect x="28.3" y="42.7" width="1.2" height="1.2" fill="#d4d4d4" opacity="0.8"/><rect x="16.5" y="22.2" width="1.2" height="1.2" fill="#4a4a4a" opacity="0.8"/><rect x="17.9" y="16.5" width="1.2" height="1.2" fill="#b0b0b0" opacity="0.8"/><rect x="42.8" y="24.2" width="1.2" height="1.2" fill="#4a4a4a" opacity="0.8"/><rect x="11.8" y="28.7" width="1.2" height="1.2" fill="#d4d4d4" opacity="0.8"/><rect x="17.4" y="41.5" width="1.2" height="1.2" fill="#4a4a4a" opacity="0.8"/><rect x="13.7" y="36.5" width="1.2" height="1.2" fill="#c0c0c0" opacity="0.8"/><rect x="15.5" y="23.7" width="1.2" height="1.2" fill="#d4d4d4" opacity="0.8"/><rect x="34.5" y="41.2" width="1.2" height="1.2" fill="#b0b0b0" opacity="0.8"/><rect x="11.4" y="27.8" width="1.2" height="1.2" fill="#b0b0b0" opacity="0.8"/><rect x="35.3" y="44.0" width="1.2" height="1.2" fill="#4a4a4a" opacity="0.8"/><rect x="26.8" y="12.4" width="1.2" height="1.2" fill="#5a5a5a" opacity="0.8"/><rect x="32.0" y="14.9" width="1.2" height="1.2" fill="#4a4a4a" opacity="0.8"/><rect x="36.9" y="42.5" width="1.2" height="1.2" fill="#4a4a4a" opacity="0.8"/><rect x="20.5" y="17.3" width="1.2" height="1.2" fill="#5a5a5a" opacity="0.8"/><rect x="41.8" y="22.1" width="1.2" height="1.2" fill="#5a5a5a" opacity="0.8"/><rect x="20.6" y="16.3" width="1.2" height="1.2" fill="#4a4a4a" opacity="0.8"/><rect x="19.0" y="41.7" width="1.2" height="1.2" fill="#b0b0b0" opacity="0.8"/><rect x="25.9" y="14.2" width="1.2" height="1.2" fill="#c0c0c0" opacity="0.8"/><rect x="43.5" y="23.0" width="1.2" height="1.2" fill="#c0c0c0" opacity="0.8"/><rect x="39.5" y="18.1" width="1.2" height="1.2" fill="#4a4a4a" opacity="0.8"/><rect x="22.2" y="44.6" width="1.2" height="1.2" fill="#b0b0b0" opacity="0.8"/><rect x="14.5" y="23.2" width="1.2" height="1.2" fill="#b0b0b0" opacity="0.8"/><rect x="16.3" y="21.4" width="1.2" height="1.2" fill="#c0c0c0" opacity="0.8"/><rect x="14.0" y="29.9" width="1.2" height="1.2" fill="#b0b0b0" opacity="0.8"/><rect x="40.3" y="18.0" width="1.2" height="1.2" fill="#5a5a5a" opacity="0.8"/><rect x="25.9" y="12.5" width="1.2" height="1.2" fill="#c0c0c0" opacity="0.8"/><rect x="41.8" y="28.7" width="1.2" height="1.2" fill="#b0b0b0" opacity="0.8"/><rect x="20.3" y="17.3" width="1.2" height="1.2" fill="#c0c0c0" opacity="0.8"/><rect x="21.5" y="13.7" width="1.2" height="1.2" fill="#b0b0b0" opacity="0.8"/><rect x="37.6" y="39.5" width="1.2" height="1.2" fill="#c0c0c0" opacity="0.8"/><rect x="40.8" y="24.3" width="1.2" height="1.2" fill="#d4d4d4" opacity="0.8"/><rect x="41.9" y="33.9" width="1.2" height="1.2" fill="#c0c0c0" opacity="0.8"/><rect x="22.2" y="17.1" width="1.2" height="1.2" fill="#d4d4d4" opacity="0.8"/><rect x="44.1" y="31.4" width="1.2" height="1.2" fill="#d4d4d4" opacity="0.8"/><rect x="19.0" y="38.6" width="1.2" height="1.2" fill="#c0c0c0" opacity="0.8"/><rect x="27.0" y="13.9" width="1.2" height="1.2" fill="#d4d4d4" opacity="0.8"/><rect x="18.5" y="37.6" width="1.2" height="1.2" fill="#c0c0c0" opacity="0.8"/><rect x="36.0" y="39.6" width="1.2" height="1.2" fill="#5a5a5a" opacity="0.8"/><rect x="42.8" y="23.1" width="1.2" height="1.2" fill="#d4d4d4" opacity="0.8"/><rect x="25.0" y="43.5" width="1.2" height="1.2" fill="#5a5a5a" opacity="0.8"/><rect x="13.2" y="34.0" width="1.2" height="1.2" fill="#d4d4d4" opacity="0.8"/><rect x="41.5" y="19.6" width="1.2" height="1.2" fill="#b0b0b0" opacity="0.8"/><rect x="24.3" y="14.6" width="1.2" height="1.2" fill="#c0c0c0" opacity="0.8"/><rect x="41.5" y="37.6" width="1.2" height="1.2" fill="#d4d4d4" opacity="0.8"/><rect x="44.4" y="31.3" width="1.2" height="1.2" fill="#c0c0c0" opacity="0.8"/><rect x="12.4" y="27.1" width="1.2" height="1.2" fill="#4a4a4a" opacity="0.8"/><rect x="14.9" y="27.6" width="1.2" height="1.2" fill="#5a5a5a" opacity="0.8"/><rect x="27.5" y="44.3" width="1.2" height="1.2" fill="#4a4a4a" opacity="0.8"/><rect x="19.4" y="15.9" width="1.2" height="1.2" fill="#c0c0c0" opacity="0.8"/><rect x="21.7" y="16.6" width="1.2" height="1.2" fill="#c0c0c0" opacity="0.8"/><rect x="35.5" y="40.3" width="1.2" height="1.2" fill="#c0c0c0" opacity="0.8"/><rect x="11.5" y="28.0" width="1.2" height="1.2" fill="#d4d4d4" opacity="0.8"/><rect x="42.3" y="28.4" width="1.2" height="1.2" fill="#4a4a4a" opacity="0.8"/><rect x="40.3" y="34.8" width="1.2" height="1.2" fill="#c0c0c0" opacity="0.8"/><rect x="16.9" y="17.5" width="1.2" height="1.2" fill="#5a5a5a" opacity="0.8"/><rect x="27.8" y="43.6" width="1.2" height="1.2" fill="#b0b0b0" opacity="0.8"/><rect x="28.5" y="15.3" width="1.2" height="1.2" fill="#4a4a4a" opacity="0.8"/><rect x="17.1" y="36.2" width="1.2" height="1.2" fill="#d4d4d4" opacity="0.8"/><rect x="29.2" y="42.3" width="1.2" height="1.2" fill="#c0c0c0" opacity="0.8"/><rect x="28.4" y="15.5" width="1.2" height="1.2" fill="#d4d4d4" opacity="0.8"/><rect x="13.7" y="27.0" width="1.2" height="1.2" fill="#5a5a5a" opacity="0.8"/><rect x="14.2" y="25.7" width="1.2" height="1.2" fill="#c0c0c0" opacity="0.8"/><rect x="26.5" y="14.3" width="1.2" height="1.2" fill="#b0b0b0" opacity="0.8"/><rect x="43.6" y="31.0" width="1.2" height="1.2" fill="#4a4a4a" opacity="0.8"/><rect x="42.2" y="22.3" width="1.2" height="1.2" fill="#d4d4d4" opacity="0.8"/><rect x="20.7" y="16.1" width="1.2" height="1.2" fill="#d4d4d4" opacity="0.8"/><circle cx="29" cy="29.5" r="17.6" fill="none" stroke="#505050" stroke-width="0.7" opacity="0.8"/><circle cx="29" cy="29.5" r="12.6" fill="url(#kg2)" stroke="#7a7a7a" stroke-width="0.8"/><line x1="29" y1="29.5" x2="29.00" y2="15.00" stroke="#000" stroke-width="1.9"/></svg></div>
<div class="a" style="left:277px;top:402px;width:58px;height:58px;background:#e3e3e3"><svg class="a" width="58" height="58" viewBox="0 0 58 58"><defs><radialGradient id="kg3" cx="0.42" cy="0.38" r="0.65"><stop offset="0" stop-color="#e6e6e6"/><stop offset="1" stop-color="#c0c0c0"/></radialGradient><linearGradient id="kr3" x1="0.2" y1="0" x2="0.8" y2="1"><stop offset="0" stop-color="#a4a4a4"/><stop offset="0.55" stop-color="#8a8a8a"/><stop offset="1" stop-color="#626262"/></linearGradient></defs><line x1="16.95" y1="46.08" x2="13.13" y2="51.34" stroke="#303030" stroke-width="1.8"/><line x1="9.50" y1="35.83" x2="3.32" y2="37.84" stroke="#303030" stroke-width="1.8"/><line x1="9.50" y1="23.17" x2="3.32" y2="21.16" stroke="#303030" stroke-width="1.8"/><line x1="16.95" y1="12.92" x2="13.13" y2="7.66" stroke="#303030" stroke-width="1.8"/><line x1="29.00" y1="9.00" x2="29.00" y2="2.50" stroke="#303030" stroke-width="1.8"/><line x1="41.05" y1="12.92" x2="44.87" y2="7.66" stroke="#303030" stroke-width="1.8"/><line x1="48.50" y1="23.17" x2="54.68" y2="21.16" stroke="#303030" stroke-width="1.8"/><line x1="48.50" y1="35.83" x2="54.68" y2="37.84" stroke="#303030" stroke-width="1.8"/><line x1="41.05" y1="46.08" x2="44.87" y2="51.34" stroke="#303030" stroke-width="1.8"/><line x1="12.01" y1="41.84" x2="9.18" y2="43.90" stroke="#b0b0b0" stroke-width="1.9"/><line x1="8.00" y1="29.50" x2="4.50" y2="29.50" stroke="#b0b0b0" stroke-width="1.9"/><line x1="12.01" y1="17.16" x2="9.18" y2="15.10" stroke="#b0b0b0" stroke-width="1.9"/><line x1="22.51" y1="9.53" x2="21.43" y2="6.20" stroke="#b0b0b0" stroke-width="1.9"/><line x1="35.49" y1="9.53" x2="36.57" y2="6.20" stroke="#b0b0b0" stroke-width="1.9"/><line x1="45.99" y1="17.16" x2="48.82" y2="15.10" stroke="#b0b0b0" stroke-width="1.9"/><line x1="50.00" y1="29.50" x2="53.50" y2="29.50" stroke="#b0b0b0" stroke-width="1.9"/><line x1="45.99" y1="41.84" x2="48.82" y2="43.90" stroke="#b0b0b0" stroke-width="1.9"/><circle cx="29" cy="29.5" r="17.8" fill="url(#kr3)"/><rect x="29.5" y="44.0" width="1.2" height="1.2" fill="#5a5a5a" opacity="0.8"/><rect x="41.3" y="21.4" width="1.2" height="1.2" fill="#b0b0b0" opacity="0.8"/><rect x="40.4" y="34.1" width="1.2" height="1.2" fill="#4a4a4a" opacity="0.8"/><rect x="27.6" y="42.8" width="1.2" height="1.2" fill="#4a4a4a" opacity="0.8"/><rect x="13.7" y="25.0" width="1.2" height="1.2" fill="#4a4a4a" opacity="0.8"/><rect x="19.7" y="18.5" width="1.2" height="1.2" fill="#c0c0c0" opacity="0.8"/><rect x="38.6" y="17.8" width="1.2" height="1.2" fill="#d4d4d4" opacity="0.8"/><rect x="22.1" y="17.2" width="1.2" height="1.2" fill="#b0b0b0" opacity="0.8"/><rect x="43.9" y="33.2" width="1.2" height="1.2" fill="#5a5a5a" opacity="0.8"/><rect x="12.8" y="31.6" width="1.2" height="1.2" fill="#4a4a4a" opacity="0.8"/><rect x="24.7" y="12.6" width="1.2" height="1.2" fill="#4a4a4a" opacity="0.8"/><rect x="26.3" y="13.7" width="1.2" height="1.2" fill="#c0c0c0" opacity="0.8"/><rect x="38.1" y="19.7" width="1.2" height="1.2" fill="#c0c0c0" opacity="0.8"/><rect x="14.4" y="29.4" width="1.2" height="1.2" fill="#4a4a4a" opacity="0.8"/><rect x="31.4" y="12.8" width="1.2" height="1.2" fill="#4a4a4a" opacity="0.8"/><rect x="13.9" y="28.2" width="1.2" height="1.2" fill="#5a5a5a" opacity="0.8"/><rect x="14.1" y="25.8" width="1.2" height="1.2" fill="#c0c0c0" opacity="0.8"/><rect x="41.4" y="20.0" width="1.2" height="1.2" fill="#d4d4d4" opacity="0.8"/><rect x="38.9" y="15.6" width="1.2" height="1.2" fill="#c0c0c0" opacity="0.8"/><rect x="23.9" y="15.3" width="1.2" height="1.2" fill="#b0b0b0" opacity="0.8"/><rect x="41.0" y="20.3" width="1.2" height="1.2" fill="#c0c0c0" opacity="0.8"/><rect x="17.0" y="16.3" width="1.2" height="1.2" fill="#5a5a5a" opacity="0.8"/><rect x="25.5" y="41.8" width="1.2" height="1.2" fill="#4a4a4a" opacity="0.8"/><rect x="42.2" y="37.5" width="1.2" height="1.2" fill="#4a4a4a" opacity="0.8"/><rect x="38.8" y="21.0" width="1.2" height="1.2" fill="#4a4a4a" opacity="0.8"/><rect x="30.3" y="12.5" width="1.2" height="1.2" fill="#d4d4d4" opacity="0.8"/><rect x="15.7" y="19.1" width="1.2" height="1.2" fill="#4a4a4a" opacity="0.8"/><rect x="25.6" y="14.9" width="1.2" height="1.2" fill="#5a5a5a" opacity="0.8"/><rect x="11.4" y="28.3" width="1.2" height="1.2" fill="#5a5a5a" opacity="0.8"/><rect x="41.8" y="29.5" width="1.2" height="1.2" fill="#b0b0b0" opacity="0.8"/><rect x="41.9" y="31.6" width="1.2" height="1.2" fill="#4a4a4a" opacity="0.8"/><rect x="24.8" y="42.5" width="1.2" height="1.2" fill="#d4d4d4" opacity="0.8"/><rect x="42.6" y="27.1" width="1.2" height="1.2" fill="#5a5a5a" opacity="0.8"/><rect x="44.4" y="24.6" width="1.2" height="1.2" fill="#4a4a4a" opacity="0.8"/><rect x="16.6" y="40.4" width="1.2" height="1.2" fill="#4a4a4a" opacity="0.8"/><rect x="18.9" y="16.8" width="1.2" height="1.2" fill="#b0b0b0" opacity="0.8"/><rect x="41.9" y="39.0" width="1.2" height="1.2" fill="#b0b0b0" opacity="0.8"/><rect x="26.3" y="44.3" width="1.2" height="1.2" fill="#c0c0c0" opacity="0.8"/><rect x="42.0" y="23.2" width="1.2" height="1.2" fill="#5a5a5a" opacity="0.8"/><rect x="13.3" y="26.9" width="1.2" height="1.2" fill="#d4d4d4" opacity="0.8"/><rect x="32.4" y="12.4" width="1.2" height="1.2" fill="#5a5a5a" opacity="0.8"/><rect x="43.7" y="30.8" width="1.2" height="1.2" fill="#c0c0c0" opacity="0.8"/><rect x="42.8" y="34.6" width="1.2" height="1.2" fill="#4a4a4a" opacity="0.8"/><rect x="18.4" y="42.2" width="1.2" height="1.2" fill="#b0b0b0" opacity="0.8"/><rect x="24.1" y="13.5" width="1.2" height="1.2" fill="#d4d4d4" opacity="0.8"/><rect x="14.2" y="19.9" width="1.2" height="1.2" fill="#d4d4d4" opacity="0.8"/><rect x="42.0" y="25.7" width="1.2" height="1.2" fill="#4a4a4a" opacity="0.8"/><rect x="23.8" y="43.6" width="1.2" height="1.2" fill="#c0c0c0" opacity="0.8"/><rect x="19.0" y="39.7" width="1.2" height="1.2" fill="#5a5a5a" opacity="0.8"/><rect x="36.2" y="17.2" width="1.2" height="1.2" fill="#4a4a4a" opacity="0.8"/><rect x="41.2" y="38.9" width="1.2" height="1.2" fill="#b0b0b0" opacity="0.8"/><rect x="22.9" y="16.5" width="1.2" height="1.2" fill="#b0b0b0" opacity="0.8"/><rect x="31.2" y="44.9" width="1.2" height="1.2" fill="#c0c0c0" opacity="0.8"/><rect x="21.0" y="42.8" width="1.2" height="1.2" fill="#d4d4d4" opacity="0.8"/><rect x="39.9" y="37.4" width="1.2" height="1.2" fill="#5a5a5a" opacity="0.8"/><rect x="22.1" y="16.5" width="1.2" height="1.2" fill="#c0c0c0" opacity="0.8"/><rect x="42.4" y="36.6" width="1.2" height="1.2" fill="#c0c0c0" opacity="0.8"/><rect x="39.5" y="19.1" width="1.2" height="1.2" fill="#c0c0c0" opacity="0.8"/><rect x="31.4" y="16.1" width="1.2" height="1.2" fill="#c0c0c0" opacity="0.8"/><rect x="21.9" y="43.9" width="1.2" height="1.2" fill="#b0b0b0" opacity="0.8"/><rect x="34.1" y="41.8" width="1.2" height="1.2" fill="#d4d4d4" opacity="0.8"/><rect x="33.4" y="15.4" width="1.2" height="1.2" fill="#c0c0c0" opacity="0.8"/><rect x="15.1" y="36.1" width="1.2" height="1.2" fill="#5a5a5a" opacity="0.8"/><rect x="13.2" y="32.3" width="1.2" height="1.2" fill="#5a5a5a" opacity="0.8"/><rect x="15.6" y="36.0" width="1.2" height="1.2" fill="#4a4a4a" opacity="0.8"/><rect x="35.6" y="39.7" width="1.2" height="1.2" fill="#b0b0b0" opacity="0.8"/><rect x="43.1" y="27.7" width="1.2" height="1.2" fill="#c0c0c0" opacity="0.8"/><rect x="42.9" y="31.9" width="1.2" height="1.2" fill="#b0b0b0" opacity="0.8"/><rect x="43.2" y="25.4" width="1.2" height="1.2" fill="#c0c0c0" opacity="0.8"/><rect x="39.0" y="16.3" width="1.2" height="1.2" fill="#5a5a5a" opacity="0.8"/><circle cx="29" cy="29.5" r="17.6" fill="none" stroke="#505050" stroke-width="0.7" opacity="0.8"/><circle cx="29" cy="29.5" r="12.6" fill="url(#kg3)" stroke="#7a7a7a" stroke-width="0.8"/><line x1="29" y1="29.5" x2="22.64" y2="16.47" stroke="#000" stroke-width="1.9"/></svg></div>
<div class="a" style="left:368px;top:402px;width:58px;height:58px;background:#e3e3e3"><svg class="a" width="58" height="58" viewBox="0 0 58 58"><defs><radialGradient id="kg4" cx="0.42" cy="0.38" r="0.65"><stop offset="0" stop-color="#e6e6e6"/><stop offset="1" stop-color="#c0c0c0"/></radialGradient><linearGradient id="kr4" x1="0.2" y1="0" x2="0.8" y2="1"><stop offset="0" stop-color="#a4a4a4"/><stop offset="0.55" stop-color="#8a8a8a"/><stop offset="1" stop-color="#626262"/></linearGradient></defs><line x1="16.95" y1="46.08" x2="13.13" y2="51.34" stroke="#303030" stroke-width="1.8"/><line x1="9.50" y1="35.83" x2="3.32" y2="37.84" stroke="#303030" stroke-width="1.8"/><line x1="9.50" y1="23.17" x2="3.32" y2="21.16" stroke="#303030" stroke-width="1.8"/><line x1="16.95" y1="12.92" x2="13.13" y2="7.66" stroke="#303030" stroke-width="1.8"/><line x1="29.00" y1="9.00" x2="29.00" y2="2.50" stroke="#303030" stroke-width="1.8"/><line x1="41.05" y1="12.92" x2="44.87" y2="7.66" stroke="#303030" stroke-width="1.8"/><line x1="48.50" y1="23.17" x2="54.68" y2="21.16" stroke="#303030" stroke-width="1.8"/><line x1="48.50" y1="35.83" x2="54.68" y2="37.84" stroke="#303030" stroke-width="1.8"/><line x1="41.05" y1="46.08" x2="44.87" y2="51.34" stroke="#303030" stroke-width="1.8"/><line x1="12.01" y1="41.84" x2="9.18" y2="43.90" stroke="#b0b0b0" stroke-width="1.9"/><line x1="8.00" y1="29.50" x2="4.50" y2="29.50" stroke="#b0b0b0" stroke-width="1.9"/><line x1="12.01" y1="17.16" x2="9.18" y2="15.10" stroke="#b0b0b0" stroke-width="1.9"/><line x1="22.51" y1="9.53" x2="21.43" y2="6.20" stroke="#b0b0b0" stroke-width="1.9"/><line x1="35.49" y1="9.53" x2="36.57" y2="6.20" stroke="#b0b0b0" stroke-width="1.9"/><line x1="45.99" y1="17.16" x2="48.82" y2="15.10" stroke="#b0b0b0" stroke-width="1.9"/><line x1="50.00" y1="29.50" x2="53.50" y2="29.50" stroke="#b0b0b0" stroke-width="1.9"/><line x1="45.99" y1="41.84" x2="48.82" y2="43.90" stroke="#b0b0b0" stroke-width="1.9"/><circle cx="29" cy="29.5" r="17.8" fill="url(#kr4)"/><rect x="29.6" y="42.3" width="1.2" height="1.2" fill="#4a4a4a" opacity="0.8"/><rect x="15.2" y="30.7" width="1.2" height="1.2" fill="#d4d4d4" opacity="0.8"/><rect x="14.8" y="38.6" width="1.2" height="1.2" fill="#d4d4d4" opacity="0.8"/><rect x="31.1" y="43.8" width="1.2" height="1.2" fill="#5a5a5a" opacity="0.8"/><rect x="31.4" y="12.9" width="1.2" height="1.2" fill="#5a5a5a" opacity="0.8"/><rect x="32.1" y="45.2" width="1.2" height="1.2" fill="#5a5a5a" opacity="0.8"/><rect x="32.7" y="15.8" width="1.2" height="1.2" fill="#5a5a5a" opacity="0.8"/><rect x="24.3" y="44.9" width="1.2" height="1.2" fill="#5a5a5a" opacity="0.8"/><rect x="41.6" y="36.9" width="1.2" height="1.2" fill="#4a4a4a" opacity="0.8"/><rect x="14.7" y="28.4" width="1.2" height="1.2" fill="#4a4a4a" opacity="0.8"/><rect x="25.3" y="45.4" width="1.2" height="1.2" fill="#b0b0b0" opacity="0.8"/><rect x="35.4" y="17.9" width="1.2" height="1.2" fill="#5a5a5a" opacity="0.8"/><rect x="13.6" y="21.6" width="1.2" height="1.2" fill="#b0b0b0" opacity="0.8"/><rect x="33.4" y="42.7" width="1.2" height="1.2" fill="#5a5a5a" opacity="0.8"/><rect x="16.0" y="34.6" width="1.2" height="1.2" fill="#5a5a5a" opacity="0.8"/><rect x="27.4" y="45.1" width="1.2" height="1.2" fill="#d4d4d4" opacity="0.8"/><rect x="43.3" y="33.3" width="1.2" height="1.2" fill="#5a5a5a" opacity="0.8"/><rect x="12.9" y="27.1" width="1.2" height="1.2" fill="#5a5a5a" opacity="0.8"/><rect x="38.0" y="41.3" width="1.2" height="1.2" fill="#d4d4d4" opacity="0.8"/><rect x="16.6" y="36.1" width="1.2" height="1.2" fill="#4a4a4a" opacity="0.8"/><rect x="26.0" y="43.1" width="1.2" height="1.2" fill="#b0b0b0" opacity="0.8"/><rect x="21.9" y="42.7" width="1.2" height="1.2" fill="#5a5a5a" opacity="0.8"/><rect x="39.1" y="36.8" width="1.2" height="1.2" fill="#c0c0c0" opacity="0.8"/><rect x="25.8" y="44.0" width="1.2" height="1.2" fill="#c0c0c0" opacity="0.8"/><rect x="40.4" y="40.5" width="1.2" height="1.2" fill="#5a5a5a" opacity="0.8"/><rect x="15.7" y="32.3" width="1.2" height="1.2" fill="#d4d4d4" opacity="0.8"/><rect x="41.7" y="18.7" width="1.2" height="1.2" fill="#5a5a5a" opacity="0.8"/><rect x="42.5" y="30.5" width="1.2" height="1.2" fill="#c0c0c0" opacity="0.8"/><rect x="30.7" y="14.4" width="1.2" height="1.2" fill="#b0b0b0" opacity="0.8"/><rect x="22.7" y="16.9" width="1.2" height="1.2" fill="#b0b0b0" opacity="0.8"/><rect x="33.7" y="42.7" width="1.2" height="1.2" fill="#c0c0c0" opacity="0.8"/><rect x="28.4" y="44.3" width="1.2" height="1.2" fill="#c0c0c0" opacity="0.8"/><rect x="22.0" y="40.3" width="1.2" height="1.2" fill="#d4d4d4" opacity="0.8"/><rect x="14.5" y="33.0" width="1.2" height="1.2" fill="#5a5a5a" opacity="0.8"/><rect x="43.7" y="28.6" width="1.2" height="1.2" fill="#4a4a4a" opacity="0.8"/><rect x="43.0" y="27.2" width="1.2" height="1.2" fill="#c0c0c0" opacity="0.8"/><rect x="38.4" y="37.6" width="1.2" height="1.2" fill="#c0c0c0" opacity="0.8"/><rect x="14.5" y="19.4" width="1.2" height="1.2" fill="#b0b0b0" opacity="0.8"/><rect x="42.9" y="32.7" width="1.2" height="1.2" fill="#c0c0c0" opacity="0.8"/><rect x="22.7" y="40.7" width="1.2" height="1.2" fill="#b0b0b0" opacity="0.8"/><rect x="23.9" y="45.3" width="1.2" height="1.2" fill="#c0c0c0" opacity="0.8"/><rect x="14.6" y="30.8" width="1.2" height="1.2" fill="#4a4a4a" opacity="0.8"/><rect x="14.5" y="29.6" width="1.2" height="1.2" fill="#4a4a4a" opacity="0.8"/><rect x="28.5" y="45.5" width="1.2" height="1.2" fill="#c0c0c0" opacity="0.8"/><rect x="15.3" y="29.0" width="1.2" height="1.2" fill="#5a5a5a" opacity="0.8"/><rect x="28.1" y="44.0" width="1.2" height="1.2" fill="#c0c0c0" opacity="0.8"/><rect x="16.2" y="35.9" width="1.2" height="1.2" fill="#5a5a5a" opacity="0.8"/><rect x="44.3" y="34.2" width="1.2" height="1.2" fill="#b0b0b0" opacity="0.8"/><rect x="39.7" y="39.1" width="1.2" height="1.2" fill="#d4d4d4" opacity="0.8"/><rect x="15.0" y="29.4" width="1.2" height="1.2" fill="#c0c0c0" opacity="0.8"/><rect x="42.2" y="22.4" width="1.2" height="1.2" fill="#c0c0c0" opacity="0.8"/><rect x="20.3" y="42.3" width="1.2" height="1.2" fill="#5a5a5a" opacity="0.8"/><rect x="34.4" y="15.0" width="1.2" height="1.2" fill="#5a5a5a" opacity="0.8"/><rect x="20.7" y="41.3" width="1.2" height="1.2" fill="#4a4a4a" opacity="0.8"/><rect x="43.5" y="36.5" width="1.2" height="1.2" fill="#c0c0c0" opacity="0.8"/><rect x="44.4" y="33.5" width="1.2" height="1.2" fill="#c0c0c0" opacity="0.8"/><rect x="29.9" y="14.9" width="1.2" height="1.2" fill="#d4d4d4" opacity="0.8"/><rect x="39.2" y="17.4" width="1.2" height="1.2" fill="#4a4a4a" opacity="0.8"/><rect x="13.9" y="22.2" width="1.2" height="1.2" fill="#4a4a4a" opacity="0.8"/><rect x="31.0" y="41.7" width="1.2" height="1.2" fill="#c0c0c0" opacity="0.8"/><rect x="44.8" y="30.3" width="1.2" height="1.2" fill="#d4d4d4" opacity="0.8"/><rect x="15.6" y="38.7" width="1.2" height="1.2" fill="#4a4a4a" opacity="0.8"/><rect x="39.3" y="18.3" width="1.2" height="1.2" fill="#c0c0c0" opacity="0.8"/><rect x="36.5" y="42.0" width="1.2" height="1.2" fill="#b0b0b0" opacity="0.8"/><rect x="30.6" y="14.2" width="1.2" height="1.2" fill="#b0b0b0" opacity="0.8"/><rect x="16.0" y="33.8" width="1.2" height="1.2" fill="#b0b0b0" opacity="0.8"/><rect x="40.0" y="38.8" width="1.2" height="1.2" fill="#5a5a5a" opacity="0.8"/><rect x="17.9" y="20.4" width="1.2" height="1.2" fill="#5a5a5a" opacity="0.8"/><rect x="42.9" y="36.8" width="1.2" height="1.2" fill="#d4d4d4" opacity="0.8"/><rect x="24.2" y="42.7" width="1.2" height="1.2" fill="#d4d4d4" opacity="0.8"/><circle cx="29" cy="29.5" r="17.6" fill="none" stroke="#505050" stroke-width="0.7" opacity="0.8"/><circle cx="29" cy="29.5" r="12.6" fill="url(#kg4)" stroke="#7a7a7a" stroke-width="0.8"/><line x1="29" y1="29.5" x2="17.73" y2="38.63" stroke="#000" stroke-width="1.9"/></svg></div>

<div class="btn" style="left:379px;top:475px;width:61px;height:24px;line-height:22px"><span class="sx">Debug...</span></div>
<div class="btn" style="left:228px;top:516px;width:61px;height:17px;line-height:15px"><span class="sx">OK</span></div>

<!-- ===== Timecode Debug window ===== -->
<div class="a" style="left:509px;top:106px;width:291px;height:445px;border:1px solid #1e1e1e;border-radius:6px 6px 3px 3px;background:linear-gradient(90deg,#ececec 0,#e6e6e6 100px,#8a8a8a 112px,#555 122px,#4e4e4e 190px,#6a6a6a 230px,#747474 100%);box-shadow:inset 0 0 0 1px rgba(255,255,255,.5)"></div>
<div class="a" style="left:510px;top:128px;width:4px;height:422px;background:linear-gradient(#ececec 0,#ececec 340px,#3a3a3a 346px,#3a3a3a 100%)"></div>
<div class="a" style="left:510px;top:474px;width:4px;height:76px;background:linear-gradient(90deg,#444 0,#777 1px,#666 2px,#222 3px)"></div>
<div class="a" style="left:792px;top:128px;width:7px;height:422px;border-radius:0 0 4px 0;background:linear-gradient(90deg,#f2f2f2 0,#f2f2f2 1px,#3a3a3a 2px,#1e1e1e 4px,#333 5px,#8a8a8a 6px)"></div>
<div class="a" style="left:510px;top:544px;width:283px;height:6px;background:linear-gradient(#f4f4f4 0,#f4f4f4 1px,#1c1c1c 2px,#1c1c1c 4px,#777 5px)"></div>
<div class="t" style="left:515px;top:112px;font-size:10.5px;color:#111;transform:scaleX(.925);transform-origin:0 0;text-shadow:0 0 5px rgba(255,255,255,.9)">Timecode Debug</div>
<div class="a" style="left:756px;top:106px;width:39px;height:17px;border:1px solid #5a1a10;border-top:none;border-radius:0 0 4px 4px;background:linear-gradient(#e8a090 0,#d05a40 45%,#b83218 55%,#c84a28 100%);box-shadow:inset 0 0 0 1px rgba(255,200,180,.45)"></div>
<svg class="a" style="left:769px;top:108px" width="13" height="11" viewBox="0 0 13 11"><path d="M3,2 L10,9 M10,2 L3,9" stroke="#5a1a10" stroke-width="3.4" stroke-linecap="round" opacity=".55"/><path d="M3,2 L10,9 M10,2 L3,9" stroke="#fff" stroke-width="2.1" stroke-linecap="square"/></svg>
<div class="a" style="left:514px;top:129px;width:280px;height:416px;background:#f0f0f0;border:1px solid #b0b0b0;border-right-color:#fff"></div>
<div class="a" style="left:523px;top:139px"><svg class="a" width="124" height="111" viewBox="0 0 124 111"><rect width="124" height="111" fill="#000"/><rect x="15" y="0" width="1" height="111" fill="#1a521a"/><rect x="62" y="0" width="1" height="111" fill="#1a521a"/><rect x="109" y="0" width="1" height="111" fill="#1a521a"/><rect x="0" y="13" width="124" height="1" fill="#1a521a"/><rect x="0" y="55" width="124" height="1" fill="#1a521a"/><rect x="0" y="98" width="124" height="1" fill="#1a521a"/><line x1="0" y1="111" x2="124" y2="0" stroke="#28e028" stroke-width="1.25" stroke-dasharray="5 0.8"/></svg></div>
<div class="t" style="left:527px;top:143px;font-size:11.5px;color:#d8d8d8;-webkit-text-stroke:0.2px #d8d8d8">3:23:11</div>
<div class="t" style="left:615px;top:143px;font-size:11.5px;color:#d8d8d8;-webkit-text-stroke:0.2px #d8d8d8">-49.9</div>
<div class="t" style="left:575px;top:232px;font-size:11px;font-weight:bold;color:#c6c6c6">Quality: 12%</div>
<div class="a" style="left:655px;top:139px"><svg class="a" width="133" height="111" viewBox="0 0 133 111"><rect width="133" height="111" fill="#000"/><g fill="#fff"><rect x="60.0" y="62.1" width="1" height="1" opacity="0.8"/><rect x="59.9" y="94.6" width="1" height="1" opacity="1"/><rect x="24.8" y="56.8" width="1" height="1" opacity="0.6"/><rect x="81.2" y="21.0" width="1" height="1" opacity="0.8"/><rect x="40.4" y="10.5" width="1" height="1" opacity="0.6"/><rect x="83.9" y="66.0" width="1" height="1" opacity="0.8"/><rect x="127.4" y="72.4" width="1" height="1" opacity="0.6"/><rect x="86.0" y="69.0" width="1" height="1" opacity="0.6"/><rect x="8.8" y="4.4" width="1" height="1" opacity="1"/><rect x="79.3" y="86.1" width="1" height="1" opacity="0.8"/><rect x="58.4" y="93.2" width="1" height="1" opacity="0.6"/><rect x="31.2" y="32.9" width="1" height="1" opacity="1"/><rect x="87.6" y="50.8" width="1" height="1" opacity="0.8"/><rect x="54.0" y="61.1" width="1" height="1" opacity="1"/><rect x="93.6" y="35.2" width="1" height="1" opacity="1"/><rect x="67.9" y="3.8" width="1" height="1" opacity="0.6"/><rect x="101.3" y="44.5" width="1" height="1" opacity="0.8"/><rect x="51.3" y="105.9" width="1" height="1" opacity="0.6"/><rect x="0.6" y="23.6" width="1" height="1" opacity="1"/><rect x="62.3" y="108.3" width="1" height="1" opacity="0.8"/><rect x="55.7" y="62.8" width="1" height="1" opacity="1"/><rect x="102.9" y="30.2" width="1" height="1" opacity="1"/><rect x="41.4" y="2.2" width="1" height="1" opacity="0.8"/><rect x="100.2" y="13.5" width="1" height="1" opacity="1"/><rect x="93.5" y="1.7" width="1" height="1" opacity="0.8"/><rect x="105.3" y="20.0" width="1" height="1" opacity="0.6"/><rect x="25.3" y="56.5" width="1" height="1" opacity="0.6"/><rect x="101.7" y="46.6" width="1" height="1" opacity="0.8"/><rect x="15.8" y="46.8" width="1" height="1" opacity="1"/><rect x="0.6" y="95.6" width="1" height="1" opacity="0.6"/><rect x="40.5" y="97.8" width="1" height="1" opacity="1"/><rect x="25.1" y="110.0" width="1" height="1" opacity="0.6"/><rect x="84.9" y="11.5" width="1" height="1" opacity="1"/><rect x="28.5" y="28.9" width="1" height="1" opacity="0.6"/><rect x="43.8" y="33.1" width="1" height="1" opacity="1"/><rect x="10.3" y="23.5" width="1" height="1" opacity="0.6"/><rect x="32.5" y="66.6" width="1" height="1" opacity="0.8"/><rect x="82.3" y="14.5" width="1" height="1" opacity="0.6"/><rect x="64.1" y="63.7" width="1" height="1" opacity="0.8"/><rect x="24.5" y="17.5" width="1" height="1" opacity="1"/><rect x="108.0" y="27.9" width="1" height="1" opacity="1"/><rect x="21.3" y="69.7" width="1" height="1" opacity="0.6"/><rect x="26.4" y="105.0" width="1" height="1" opacity="0.8"/><rect x="79.9" y="46.9" width="1" height="1" opacity="1"/><rect x="14.8" y="56.9" width="1" height="1" opacity="0.8"/><rect x="31.9" y="78.0" width="1" height="1" opacity="0.8"/><rect x="55.8" y="100.0" width="1" height="1" opacity="0.8"/><rect x="39.1" y="19.8" width="1" height="1" opacity="0.6"/><rect x="129.0" y="14.4" width="1" height="1" opacity="0.8"/><rect x="74.1" y="94.3" width="1" height="1" opacity="0.6"/><rect x="10.2" y="23.9" width="1" height="1" opacity="1"/><rect x="99.0" y="8.1" width="1" height="1" opacity="0.8"/><rect x="59.1" y="7.2" width="1" height="1" opacity="1"/><rect x="37.6" y="58.9" width="1" height="1" opacity="1"/><rect x="12.6" y="15.7" width="1" height="1" opacity="0.8"/><rect x="129.4" y="72.8" width="1" height="1" opacity="0.6"/><rect x="69.1" y="104.7" width="1" height="1" opacity="0.6"/><rect x="5.1" y="2.5" width="1" height="1" opacity="0.8"/><rect x="92.7" y="106.4" width="1" height="1" opacity="1"/><rect x="79.2" y="8.7" width="1" height="1" opacity="1"/><rect x="96.6" y="35.6" width="1" height="1" opacity="1"/><rect x="10.4" y="60.6" width="1" height="1" opacity="0.6"/><rect x="6.3" y="103.5" width="1" height="1" opacity="0.6"/><rect x="93.0" y="87.8" width="1" height="1" opacity="0.8"/><rect x="46.8" y="75.9" width="1" height="1" opacity="1"/></g><g fill="#fff"><rect x="62.9" y="0.7" width="1" height="1" opacity="0.6"/><rect x="46.5" y="0.4" width="1" height="1" opacity="0.8"/><rect x="64.0" y="0.6" width="1" height="1" opacity="0.8"/><rect x="91.3" y="0.6" width="1" height="1" opacity="0.6"/><rect x="0.7" y="0.6" width="1" height="1" opacity="0.8"/><rect x="48.8" y="0.3" width="1" height="1" opacity="1"/><rect x="8.2" y="0.8" width="1" height="1" opacity="1"/><rect x="68.0" y="0.8" width="1" height="1" opacity="0.6"/><rect x="53.7" y="0.8" width="1" height="1" opacity="1"/><rect x="121.3" y="0.8" width="1" height="1" opacity="0.6"/><rect x="67.4" y="0.1" width="1" height="1" opacity="0.8"/><rect x="125.0" y="0.1" width="1" height="1" opacity="0.8"/><rect x="128.2" y="0.5" width="1" height="1" opacity="0.6"/><rect x="73.9" y="1.0" width="1" height="1" opacity="1"/><rect x="73.5" y="0.5" width="1" height="1" opacity="1"/><rect x="53.2" y="0.4" width="1" height="1" opacity="0.6"/><rect x="62.3" y="0.6" width="1" height="1" opacity="0.6"/><rect x="4.5" y="0.7" width="1" height="1" opacity="1"/><rect x="128.9" y="0.7" width="1" height="1" opacity="0.8"/><rect x="124.3" y="0.9" width="1" height="1" opacity="0.8"/><rect x="89.1" y="0.1" width="1" height="1" opacity="1"/><rect x="44.6" y="0.4" width="1" height="1" opacity="0.6"/><rect x="107.0" y="0.5" width="1" height="1" opacity="1"/><rect x="50.6" y="0.9" width="1" height="1" opacity="1"/><rect x="68.7" y="0.2" width="1" height="1" opacity="0.8"/><rect x="6.2" y="0.2" width="1" height="1" opacity="0.6"/><rect x="14.0" y="0.5" width="1" height="1" opacity="1"/><rect x="10.8" y="0.3" width="1" height="1" opacity="0.8"/><rect x="36.9" y="0.3" width="1" height="1" opacity="0.6"/><rect x="96.0" y="0.5" width="1" height="1" opacity="0.8"/><rect x="28.0" y="0.3" width="1" height="1" opacity="0.8"/><rect x="92.1" y="0.9" width="1" height="1" opacity="1"/><rect x="126.2" y="0.2" width="1" height="1" opacity="0.6"/><rect x="48.4" y="0.2" width="1" height="1" opacity="0.6"/><rect x="29.4" y="0.6" width="1" height="1" opacity="0.8"/><rect x="120.9" y="0.8" width="1" height="1" opacity="1"/><rect x="32.3" y="0.0" width="1" height="1" opacity="1"/><rect x="33.1" y="0.1" width="1" height="1" opacity="0.8"/><rect x="131.8" y="0.5" width="1" height="1" opacity="1"/><rect x="122.5" y="0.9" width="1" height="1" opacity="0.6"/><rect x="109.9" y="0.6" width="1" height="1" opacity="1"/><rect x="103.6" y="0.5" width="1" height="1" opacity="0.8"/><rect x="83.0" y="0.3" width="1" height="1" opacity="0.8"/><rect x="118.1" y="0.2" width="1" height="1" opacity="0.8"/><rect x="81.6" y="0.0" width="1" height="1" opacity="0.8"/><rect x="124.6" y="0.5" width="1" height="1" opacity="0.6"/><rect x="59.0" y="0.8" width="1" height="1" opacity="0.6"/><rect x="38.0" y="0.3" width="1" height="1" opacity="0.6"/><rect x="1.0" y="0.0" width="1" height="1" opacity="0.6"/><rect x="117.1" y="0.4" width="1" height="1" opacity="1"/><rect x="26.8" y="0.5" width="1" height="1" opacity="1"/><rect x="74.1" y="0.6" width="1" height="1" opacity="0.8"/><rect x="100.5" y="0.4" width="1" height="1" opacity="0.6"/><rect x="12.7" y="0.4" width="1" height="1" opacity="1"/><rect x="76.8" y="0.3" width="1" height="1" opacity="0.8"/><rect x="84.4" y="0.4" width="1" height="1" opacity="1"/><rect x="2.8" y="0.7" width="1" height="1" opacity="1"/><rect x="105.4" y="0.9" width="1" height="1" opacity="0.8"/><rect x="70.8" y="0.8" width="1" height="1" opacity="0.8"/><rect x="104.7" y="0.7" width="1" height="1" opacity="1"/><rect x="41.5" y="0.9" width="1" height="1" opacity="0.6"/><rect x="90.8" y="0.5" width="1" height="1" opacity="0.6"/><rect x="16.9" y="0.5" width="1" height="1" opacity="0.6"/><rect x="89.8" y="0.6" width="1" height="1" opacity="1"/><rect x="54.0" y="0.3" width="1" height="1" opacity="0.6"/><rect x="44.2" y="0.7" width="1" height="1" opacity="0.6"/><rect x="41.6" y="0.7" width="1" height="1" opacity="0.6"/><rect x="87.2" y="0.9" width="1" height="1" opacity="0.8"/><rect x="23.6" y="0.2" width="1" height="1" opacity="0.6"/><rect x="58.8" y="0.2" width="1" height="1" opacity="0.6"/><rect x="78.6" y="0.5" width="1" height="1" opacity="0.8"/><rect x="13.2" y="0.2" width="1" height="1" opacity="0.8"/><rect x="48.7" y="0.8" width="1" height="1" opacity="0.6"/><rect x="57.4" y="0.2" width="1" height="1" opacity="1"/><rect x="66.4" y="0.7" width="1" height="1" opacity="1"/><rect x="66.3" y="0.4" width="1" height="1" opacity="0.6"/><rect x="111.3" y="0.2" width="1" height="1" opacity="0.8"/><rect x="103.8" y="0.0" width="1" height="1" opacity="1"/><rect x="54.1" y="0.7" width="1" height="1" opacity="0.8"/><rect x="69.1" y="0.4" width="1" height="1" opacity="1"/><rect x="128.4" y="0.6" width="1" height="1" opacity="0.6"/><rect x="41.5" y="0.8" width="1" height="1" opacity="1"/><rect x="42.9" y="0.5" width="1" height="1" opacity="0.8"/><rect x="83.7" y="0.2" width="1" height="1" opacity="0.8"/><rect x="30.2" y="0.5" width="1" height="1" opacity="0.8"/><rect x="65.5" y="0.4" width="1" height="1" opacity="0.8"/><rect x="38.1" y="0.9" width="1" height="1" opacity="0.6"/><rect x="37.7" y="0.8" width="1" height="1" opacity="0.6"/><rect x="42.7" y="0.1" width="1" height="1" opacity="0.6"/><rect x="4.8" y="0.7" width="1" height="1" opacity="0.8"/><rect x="54.7" y="0.6" width="1" height="1" opacity="0.8"/><rect x="45.2" y="0.8" width="1" height="1" opacity="0.8"/><rect x="51.1" y="0.4" width="1" height="1" opacity="1"/><rect x="22.8" y="0.2" width="1" height="1" opacity="0.8"/><rect x="14.9" y="0.3" width="1" height="1" opacity="1"/><rect x="114.7" y="0.7" width="1" height="1" opacity="0.6"/><rect x="108.5" y="0.4" width="1" height="1" opacity="0.6"/><rect x="120.8" y="0.8" width="1" height="1" opacity="0.8"/><rect x="110.0" y="0.2" width="1" height="1" opacity="1"/><rect x="73.6" y="0.0" width="1" height="1" opacity="1"/><rect x="26.2" y="0.2" width="1" height="1" opacity="0.8"/><rect x="122.4" y="1.0" width="1" height="1" opacity="0.8"/><rect x="72.3" y="0.0" width="1" height="1" opacity="1"/><rect x="48.4" y="0.5" width="1" height="1" opacity="1"/><rect x="59.5" y="0.5" width="1" height="1" opacity="0.6"/><rect x="17.2" y="0.4" width="1" height="1" opacity="0.8"/><rect x="84.1" y="0.5" width="1" height="1" opacity="0.6"/><rect x="111.0" y="0.9" width="1" height="1" opacity="0.6"/><rect x="4.2" y="0.8" width="1" height="1" opacity="1"/><rect x="122.1" y="0.5" width="1" height="1" opacity="0.8"/></g><g transform="translate(0,109.5)"><g fill="#fff"><rect x="34.6" y="0.7" width="1" height="1" opacity="0.6"/><rect x="106.0" y="0.9" width="1" height="1" opacity="0.6"/><rect x="30.8" y="0.1" width="1" height="1" opacity="1"/><rect x="84.8" y="0.2" width="1" height="1" opacity="1"/><rect x="70.4" y="0.2" width="1" height="1" opacity="0.8"/><rect x="4.4" y="0.1" width="1" height="1" opacity="0.6"/><rect x="80.5" y="0.0" width="1" height="1" opacity="0.8"/><rect x="110.2" y="0.1" width="1" height="1" opacity="0.8"/><rect x="109.2" y="0.7" width="1" height="1" opacity="1"/><rect x="104.9" y="0.3" width="1" height="1" opacity="1"/><rect x="64.5" y="0.8" width="1" height="1" opacity="0.6"/><rect x="129.6" y="0.7" width="1" height="1" opacity="0.8"/><rect x="84.5" y="0.7" width="1" height="1" opacity="0.8"/><rect x="108.3" y="0.8" width="1" height="1" opacity="0.8"/><rect x="91.4" y="0.6" width="1" height="1" opacity="0.6"/><rect x="130.3" y="0.4" width="1" height="1" opacity="0.6"/><rect x="58.8" y="0.2" width="1" height="1" opacity="1"/><rect x="24.1" y="0.4" width="1" height="1" opacity="0.8"/><rect x="60.9" y="0.6" width="1" height="1" opacity="0.8"/><rect x="117.4" y="0.6" width="1" height="1" opacity="0.6"/><rect x="31.5" y="0.2" width="1" height="1" opacity="1"/><rect x="92.8" y="0.1" width="1" height="1" opacity="0.8"/><rect x="86.1" y="1.0" width="1" height="1" opacity="0.8"/><rect x="0.8" y="0.4" width="1" height="1" opacity="1"/><rect x="30.1" y="0.5" width="1" height="1" opacity="0.6"/><rect x="110.7" y="0.6" width="1" height="1" opacity="1"/><rect x="96.9" y="0.7" width="1" height="1" opacity="0.8"/><rect x="117.0" y="0.8" width="1" height="1" opacity="1"/><rect x="93.3" y="0.6" width="1" height="1" opacity="0.6"/><rect x="94.7" y="0.1" width="1" height="1" opacity="0.6"/><rect x="79.9" y="0.7" width="1" height="1" opacity="1"/><rect x="113.8" y="0.0" width="1" height="1" opacity="0.6"/><rect x="78.2" y="0.4" width="1" height="1" opacity="0.6"/><rect x="75.4" y="0.2" width="1" height="1" opacity="1"/><rect x="22.1" y="0.7" width="1" height="1" opacity="1"/><rect x="118.9" y="0.2" width="1" height="1" opacity="0.8"/><rect x="85.1" y="0.6" width="1" height="1" opacity="0.6"/><rect x="91.9" y="1.0" width="1" height="1" opacity="0.8"/><rect x="85.3" y="0.5" width="1" height="1" opacity="1"/><rect x="131.7" y="0.1" width="1" height="1" opacity="0.8"/><rect x="119.7" y="0.6" width="1" height="1" opacity="0.6"/><rect x="10.7" y="0.5" width="1" height="1" opacity="0.8"/><rect x="112.5" y="0.0" width="1" height="1" opacity="0.8"/><rect x="44.5" y="0.5" width="1" height="1" opacity="0.6"/><rect x="68.4" y="0.5" width="1" height="1" opacity="0.6"/><rect x="27.8" y="0.8" width="1" height="1" opacity="0.8"/><rect x="66.4" y="0.9" width="1" height="1" opacity="0.6"/><rect x="19.7" y="0.4" width="1" height="1" opacity="1"/><rect x="34.5" y="0.6" width="1" height="1" opacity="0.8"/><rect x="102.1" y="0.6" width="1" height="1" opacity="0.8"/><rect x="27.3" y="0.4" width="1" height="1" opacity="1"/><rect x="42.2" y="0.5" width="1" height="1" opacity="1"/><rect x="100.2" y="0.6" width="1" height="1" opacity="1"/><rect x="86.4" y="0.3" width="1" height="1" opacity="0.8"/><rect x="63.7" y="0.6" width="1" height="1" opacity="0.8"/><rect x="8.6" y="0.5" width="1" height="1" opacity="1"/><rect x="20.0" y="0.1" width="1" height="1" opacity="0.8"/><rect x="108.8" y="0.2" width="1" height="1" opacity="0.8"/><rect x="79.8" y="0.3" width="1" height="1" opacity="0.8"/><rect x="17.4" y="0.4" width="1" height="1" opacity="0.8"/><rect x="77.5" y="0.6" width="1" height="1" opacity="0.8"/><rect x="6.2" y="0.5" width="1" height="1" opacity="1"/><rect x="127.7" y="0.0" width="1" height="1" opacity="1"/><rect x="117.9" y="0.5" width="1" height="1" opacity="1"/><rect x="119.2" y="0.9" width="1" height="1" opacity="0.6"/><rect x="20.2" y="0.5" width="1" height="1" opacity="0.8"/><rect x="9.8" y="0.3" width="1" height="1" opacity="1"/><rect x="6.7" y="0.2" width="1" height="1" opacity="1"/><rect x="68.9" y="0.9" width="1" height="1" opacity="0.8"/><rect x="26.1" y="0.4" width="1" height="1" opacity="1"/><rect x="110.9" y="0.9" width="1" height="1" opacity="1"/><rect x="81.2" y="0.9" width="1" height="1" opacity="0.8"/><rect x="70.7" y="0.3" width="1" height="1" opacity="0.6"/><rect x="39.7" y="0.1" width="1" height="1" opacity="1"/><rect x="123.0" y="0.2" width="1" height="1" opacity="1"/><rect x="14.6" y="0.7" width="1" height="1" opacity="1"/><rect x="132.0" y="0.8" width="1" height="1" opacity="0.8"/><rect x="21.6" y="1.0" width="1" height="1" opacity="0.6"/><rect x="94.7" y="0.3" width="1" height="1" opacity="1"/><rect x="14.9" y="0.3" width="1" height="1" opacity="0.8"/><rect x="62.5" y="0.3" width="1" height="1" opacity="1"/><rect x="59.7" y="0.0" width="1" height="1" opacity="1"/><rect x="70.5" y="0.3" width="1" height="1" opacity="1"/><rect x="123.7" y="0.2" width="1" height="1" opacity="0.8"/><rect x="55.2" y="1.0" width="1" height="1" opacity="0.8"/><rect x="54.3" y="0.2" width="1" height="1" opacity="0.6"/><rect x="119.1" y="0.5" width="1" height="1" opacity="1"/><rect x="101.3" y="0.7" width="1" height="1" opacity="1"/><rect x="4.3" y="0.9" width="1" height="1" opacity="0.8"/><rect x="108.5" y="0.2" width="1" height="1" opacity="1"/><rect x="1.2" y="0.1" width="1" height="1" opacity="1"/><rect x="116.9" y="0.5" width="1" height="1" opacity="0.6"/><rect x="95.8" y="0.1" width="1" height="1" opacity="0.6"/><rect x="98.5" y="0.6" width="1" height="1" opacity="0.8"/><rect x="4.1" y="0.5" width="1" height="1" opacity="0.6"/><rect x="19.4" y="0.8" width="1" height="1" opacity="1"/><rect x="86.0" y="0.7" width="1" height="1" opacity="0.8"/><rect x="122.2" y="0.3" width="1" height="1" opacity="0.8"/><rect x="3.3" y="0.1" width="1" height="1" opacity="0.8"/><rect x="70.2" y="0.0" width="1" height="1" opacity="0.8"/><rect x="117.8" y="0.9" width="1" height="1" opacity="0.6"/><rect x="29.5" y="0.1" width="1" height="1" opacity="0.6"/><rect x="131.0" y="0.2" width="1" height="1" opacity="0.6"/><rect x="97.9" y="0.1" width="1" height="1" opacity="1"/><rect x="123.0" y="0.8" width="1" height="1" opacity="1"/><rect x="90.1" y="0.7" width="1" height="1" opacity="0.6"/><rect x="37.8" y="0.1" width="1" height="1" opacity="0.6"/><rect x="18.1" y="0.7" width="1" height="1" opacity="0.6"/><rect x="14.2" y="0.5" width="1" height="1" opacity="1"/><rect x="80.7" y="0.5" width="1" height="1" opacity="0.8"/></g></g><rect x="0" y="55" width="133" height="1.3" fill="#22d022"/></svg></div>
<div class="a" style="left:522px;top:258px"><svg class="a" width="266" height="80" viewBox="0 0 266 80"><rect width="266" height="80" fill="#000"/><rect x="0" y="0" width="266" height="1.5" fill="#d42020"/><line x1="0" y1="0.75" x2="266" y2="0.75" stroke="#3ccc3c" stroke-width="1.5" stroke-dasharray="3 2"/><rect x="0" y="78.5" width="266" height="1.5" fill="#d42020"/><line x1="0" y1="79.25" x2="266" y2="79.25" stroke="#3ccc3c" stroke-width="1.5" stroke-dasharray="3 2"/><rect x="2.1" y="0" width="1.1" height="80" fill="#d42020"/><rect x="1.0" y="55.0" width="1.2" height="25.0" fill="#3ccc3c"/><rect x="15.4" y="0" width="1.1" height="80" fill="#d42020"/><rect x="14.3" y="44.6" width="1.2" height="35.4" fill="#3ccc3c"/><rect x="24.6" y="0" width="1.1" height="80" fill="#d42020"/><rect x="23.5" y="0" width="1.2" height="20.1" fill="#3ccc3c"/><rect x="37.5" y="0" width="1.1" height="80" fill="#d42020"/><rect x="36.4" y="57.0" width="1.2" height="23.0" fill="#3ccc3c"/><rect x="47.4" y="0" width="1.1" height="80" fill="#d42020"/><rect x="46.3" y="0" width="1.2" height="37.4" fill="#3ccc3c"/><rect x="60.1" y="0" width="1.1" height="80" fill="#d42020"/><rect x="59.0" y="0" width="1.2" height="39.3" fill="#3ccc3c"/><rect x="69.5" y="0" width="1.1" height="80" fill="#d42020"/><rect x="68.4" y="0" width="1.2" height="19.3" fill="#3ccc3c"/><rect x="83.5" y="0" width="1.1" height="80" fill="#d42020"/><rect x="82.4" y="50.2" width="1.2" height="29.8" fill="#3ccc3c"/><rect x="92.2" y="0" width="1.1" height="80" fill="#d42020"/><rect x="91.1" y="51.8" width="1.2" height="28.2" fill="#3ccc3c"/><rect x="105.7" y="0" width="1.1" height="80" fill="#d42020"/><rect x="104.6" y="59.3" width="1.2" height="20.7" fill="#3ccc3c"/><rect x="115.3" y="0" width="1.1" height="80" fill="#d42020"/><rect x="114.2" y="0" width="1.2" height="20.9" fill="#3ccc3c"/><rect x="128.0" y="0" width="1.1" height="80" fill="#d42020"/><rect x="126.9" y="40.5" width="1.2" height="39.5" fill="#3ccc3c"/><rect x="137.2" y="0" width="1.1" height="80" fill="#d42020"/><rect x="136.1" y="61.8" width="1.2" height="18.2" fill="#3ccc3c"/><rect x="150.9" y="0" width="1.1" height="80" fill="#d42020"/><rect x="149.8" y="0" width="1.2" height="31.0" fill="#3ccc3c"/><rect x="160.2" y="0" width="1.1" height="80" fill="#d42020"/><rect x="159.1" y="60.0" width="1.2" height="20.0" fill="#3ccc3c"/><rect x="174.0" y="0" width="1.1" height="80" fill="#d42020"/><rect x="172.9" y="39.9" width="1.2" height="40.1" fill="#3ccc3c"/><rect x="182.8" y="0" width="1.1" height="80" fill="#d42020"/><rect x="181.7" y="0" width="1.2" height="27.6" fill="#3ccc3c"/><rect x="195.8" y="0" width="1.1" height="80" fill="#d42020"/><rect x="194.7" y="59.8" width="1.2" height="20.2" fill="#3ccc3c"/><rect x="204.6" y="0" width="1.1" height="80" fill="#d42020"/><rect x="203.5" y="0" width="1.2" height="22.1" fill="#3ccc3c"/><rect x="218.0" y="0" width="1.1" height="80" fill="#d42020"/><rect x="216.9" y="39.0" width="1.2" height="41.0" fill="#3ccc3c"/><rect x="228.1" y="0" width="1.1" height="80" fill="#d42020"/><rect x="227.0" y="48.7" width="1.2" height="31.3" fill="#3ccc3c"/><rect x="241.6" y="0" width="1.1" height="80" fill="#d42020"/><rect x="240.5" y="58.4" width="1.2" height="21.6" fill="#3ccc3c"/><rect x="251.5" y="0" width="1.1" height="80" fill="#d42020"/><rect x="250.4" y="0" width="1.2" height="41.9" fill="#3ccc3c"/><rect x="264.7" y="0" width="1.1" height="80" fill="#d42020"/><rect x="263.6" y="59.1" width="1.2" height="20.9" fill="#3ccc3c"/></svg></div>

<div class="chk" style="left:522px;top:356px"></div>
<div class="t d" style="left:535px;top:357px;font-size:9px;color:#111">Inverser Stéréo du signal</div>
<div class="chk" style="left:655px;top:356px"></div>
<div class="t d" style="left:668px;top:357px;font-size:9px;color:#111">Inverser Phase du signal</div>
<svg class="a" style="left:655px;top:356px" width="11" height="11" viewBox="0 0 11 11"><path d="M2.2,5.6 L4.4,8.3 L8.8,2.3" fill="none" stroke="#3a55a0" stroke-width="1.4" stroke-linecap="round" stroke-linejoin="round"/></svg>
<div class="chk" style="left:522px;top:380px"></div>
<svg class="a" style="left:522px;top:380px" width="11" height="11" viewBox="0 0 11 11"><path d="M2.2,5.6 L4.4,8.3 L8.8,2.3" fill="none" stroke="#3a55a0" stroke-width="1.4" stroke-linecap="round" stroke-linejoin="round"/></svg>
<div class="t d" style="left:535px;top:381px;font-size:9px;color:#111">Appliquer filtre 'phono RIAA'</div>
<div class="chk" style="left:655px;top:380px"></div>
<div class="t d" style="left:668px;top:381px;font-size:9px;color:#111">Appliquer filtre 'noise LP'</div>
<div class="chk" style="left:522px;top:404px"></div>
<div class="t d" style="left:535px;top:405px;font-size:9px;color:#111">Ajuster pour 45 tours</div>
<div class="chk" style="left:655px;top:404px"></div>
<div class="t d" style="left:668px;top:405px;font-size:9px;color:#111">Désactiver Pitch</div>
<div class="t d" style="left:738px;top:428px;font-size:9px">ip'</div>
<div class="t d" style="left:738px;top:451px;font-size:9px">Delayed</div>
<div class="t d" style="left:522px;top:476px;font-size:9px">Lead time :</div>
<div class="a" style="left:591px;top:476px;width:82px;height:2px;border-top:1px solid #9c9c9c;border-bottom:1px solid #fff"></div>
<div class="a" style="left:612px;top:477px;width:1px;height:4px;background:#888"></div>
<div class="t d" style="left:685px;top:472px;font-size:9px">494.9m</div>
<div class="btn hot" style="left:693px;top:488px;width:90px;height:22px;line-height:20px"><span class="sx">Sauver capture...</span></div>
<div class="btn" style="left:627px;top:516px;width:60px;height:17px;line-height:15px"><span class="sx">OK</span></div>

<!-- ===== Tooltip ===== -->
<svg class="a" style="left:388px;top:418px" width="360" height="80" viewBox="0 0 360 80">
<defs><linearGradient id="ttg" x1="0" y1="0" x2="0" y2="1"><stop offset="0" stop-color="#ffffff"/><stop offset="1" stop-color="#e4e5f0"/></linearGradient>
<filter id="tsh" x="-10%" y="-10%" width="120%" height="140%"><feGaussianBlur in="SourceAlpha" stdDeviation="1.5"/><feOffset dx="1.5" dy="2"/><feComponentTransfer><feFuncA type="linear" slope="0.35"/></feComponentTransfer><feMerge><feMergeNode/><feMergeNode in="SourceGraphic"/></feMerge></filter></defs>
<path filter="url(#tsh)" d="M8,4.5 H348 Q351,4.5 351,7.5 V52.5 Q351,55.5 348,55.5 H339 L338,71 L325,55.5 H8 Q5,55.5 5,52.5 V7.5 Q5,4.5 8,4.5 Z" fill="url(#ttg)" stroke="#767676" stroke-width="1"/>
</svg>
<div class="t" style="left:402px;top:429.5px;font-size:10.8px;line-height:12px;color:#2c2c2c;transform:scaleX(.913);transform-origin:0 0">Utilisez ce bouton pour sauvegarder un fichier .bmp de votre configuration.<br>Vous pouvez poster cette image sur le forum de www.virtualdj.com si vous<br>avez besoin d'aide pour configurer/optimiser votre signal timecode.</div>

</body></html>
